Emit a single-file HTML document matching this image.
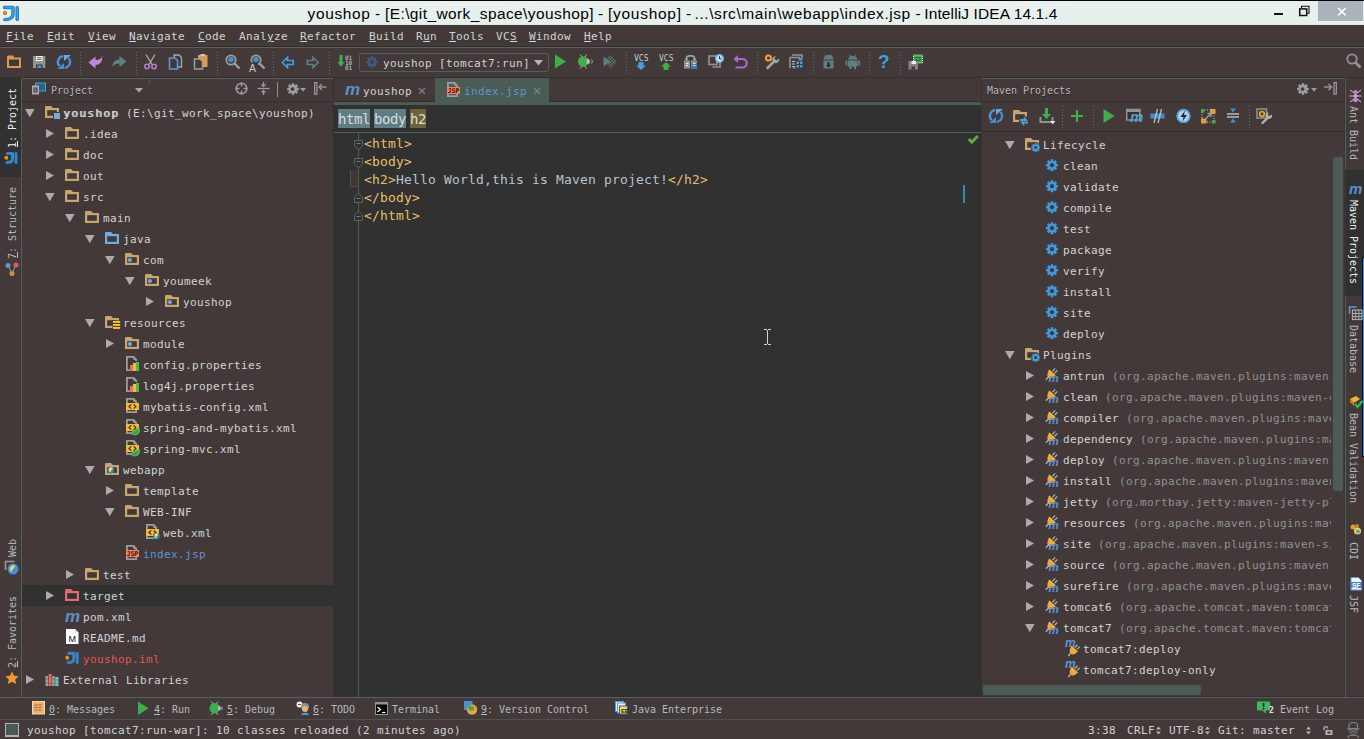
<!DOCTYPE html>
<html lang="en">
<head>
<meta charset="utf-8">
<title>youshop - IntelliJ IDEA 14.1.4</title>
<style>
html,body{margin:0;padding:0;}
body{width:1364px;height:739px;overflow:hidden;background:#433938;position:relative;
 font-family:"DejaVu Sans Mono","Liberation Mono",monospace;font-size:12px;color:#d0d4d4;}
body>div,body>span,body>svg{position:absolute;}
div{box-sizing:border-box;}
.t{white-space:pre;line-height:21px;height:21px;letter-spacing:0.378px;font-size:11px;}
.b{letter-spacing:1.378px;text-shadow:1px 0 0 currentColor;}
.e{white-space:pre;line-height:18px;height:18px;font-size:13px;letter-spacing:0.173px;}
.ti{white-space:pre;font-family:"Liberation Sans",sans-serif;font-size:15.5px;line-height:24px;color:#000;letter-spacing:0.38px;}
.v{white-space:pre;line-height:20px;height:20px;letter-spacing:-0.224px;font-size:12px;transform-origin:0 0;}
.s{white-space:pre;font-size:7px;line-height:7px;font-family:"Liberation Sans",sans-serif;}
u{text-decoration:underline;text-underline-offset:1px;text-decoration-thickness:1px;}
.i{overflow:visible;}
.h{white-space:pre;line-height:21px;height:21px;font-size:10px;letter-spacing:-0.02px;text-shadow:0 1px 0 #2a2423;}
.vr{white-space:pre;writing-mode:vertical-rl;font-size:10px;line-height:14px;width:14px;letter-spacing:-0.02px;color:#b4bac0;}
.vl{white-space:pre;writing-mode:vertical-rl;transform:rotate(180deg);font-size:10px;line-height:14px;width:14px;letter-spacing:-0.02px;color:#b4bac0;}
.q{white-space:pre;line-height:21px;height:21px;font-size:10px;letter-spacing:-0.02px;color:#b4bac0;}
.m{white-space:pre;color:#5a90cc;font:italic bold 17px/20px 'Liberation Sans',sans-serif;height:21px;letter-spacing:0;}
.jsp{color:#3a0c06;font-weight:bold;font-size:6.5px;line-height:7px;letter-spacing:0;font-family:'DejaVu Sans Mono',monospace;}
.pm{white-space:pre;color:#5a96d8;font:italic bold 11.5px/16px 'Liberation Sans',sans-serif;letter-spacing:0;}
.bc{font-size:14px;letter-spacing:-0.43px;color:#d8dcdc;line-height:19px;height:19px;}
</style>
</head>
<body>
<div style="left:0px;top:0px;width:1364px;height:1px;background:#000;"></div>
<div style="left:0px;top:1px;width:1364px;height:24px;background:#e8f0ee;"></div>
<div style="left:0px;top:24px;width:1364px;height:1px;background:#d9ecd9;"></div>
<span class="ti" style="left:307.6px;top:2px;letter-spacing:0.599px">youshop</span>
<span class="ti" style="left:375.1px;top:2px;letter-spacing:0px">-</span>
<span class="ti" style="left:385.0px;top:2px;letter-spacing:0.397px">[E:\git_work_space\youshop]</span>
<span class="ti" style="left:597.9px;top:2px;letter-spacing:0px">-</span>
<span class="ti" style="left:607.9px;top:2px;letter-spacing:0.742px">[youshop]</span>
<span class="ti" style="left:685.9px;top:2px;letter-spacing:0px">-</span>
<span class="ti" style="left:694.6px;top:2px;letter-spacing:0.563px">...\src\main\webapp\index.jsp</span>
<span class="ti" style="left:915.4px;top:2px;letter-spacing:0px">-</span>
<span class="ti" style="left:924.3px;top:2px;letter-spacing:0.107px">IntelliJ IDEA 14.1.4</span>
<svg class="i" style="left:3px;top:5px" width="18" height="17" viewBox="0 0 18 17"><path d="M1.5 2.5h8.5v6.5c0 3.6-3 5.6-8.2 5.6" fill="none" stroke="#1f6fae" stroke-width="3.4" stroke-linecap="round" stroke-linejoin="round"/><path d="M1.5 2.5h8.5v6.5c0 3.6-3 5.6-8.2 5.6" fill="none" stroke="#35a3e8" stroke-width="1.8" stroke-linecap="round" stroke-linejoin="round"/><path d="M14.2 2.6v11.8" stroke="#1f6fae" stroke-width="3.4" stroke-linecap="round"/><path d="M14.2 2.6v11.8" stroke="#35a3e8" stroke-width="1.6" stroke-linecap="round"/><circle cx="2" cy="8" r="2" fill="#b85c00"/><circle cx="2" cy="7.8" r="1.1" fill="#ff9a1a"/></svg>
<div style="left:1274px;top:13px;width:9px;height:2px;background:#111;"></div>
<svg class="i" style="left:1298px;top:5px" width="13" height="12" viewBox="0 0 13 12"><path d="M3.5 3V1.2h7.5v7h-1.8" fill="none" stroke="#111" stroke-width="1.1"/><rect x="1.7" y="3.9" width="7" height="6.6" fill="none" stroke="#111" stroke-width="1.5"/></svg>
<div style="left:1318px;top:1px;width:45px;height:20px;background:#abb2bb;"></div>
<svg class="i" style="left:1336px;top:6px" width="12" height="11" viewBox="0 0 12 11"><path d="M2.2 2l7.4 7.4M9.6 2l-7.4 7.400" stroke="#fff" stroke-width="1.6"/></svg>
<span class="t" style="left:6px;top:26px;color:#d0d4d4;"><u>F</u>ile</span>
<span class="t" style="left:47px;top:26px;color:#d0d4d4;"><u>E</u>dit</span>
<span class="t" style="left:88px;top:26px;color:#d0d4d4;"><u>V</u>iew</span>
<span class="t" style="left:129px;top:26px;color:#d0d4d4;"><u>N</u>avigate</span>
<span class="t" style="left:198px;top:26px;color:#d0d4d4;"><u>C</u>ode</span>
<span class="t" style="left:239px;top:26px;color:#d0d4d4;">Anal<u>y</u>ze</span>
<span class="t" style="left:300px;top:26px;color:#d0d4d4;"><u>R</u>efactor</span>
<span class="t" style="left:369px;top:26px;color:#d0d4d4;"><u>B</u>uild</span>
<span class="t" style="left:416px;top:26px;color:#d0d4d4;">R<u>u</u>n</span>
<span class="t" style="left:449px;top:26px;color:#d0d4d4;"><u>T</u>ools</span>
<span class="t" style="left:496px;top:26px;color:#d0d4d4;">VC<u>S</u></span>
<span class="t" style="left:529px;top:26px;color:#d0d4d4;"><u>W</u>indow</span>
<span class="t" style="left:584px;top:26px;color:#d0d4d4;"><u>H</u>elp</span>
<div style="left:0px;top:46px;width:1364px;height:1px;background:#352e2d;"></div>
<div style="left:0px;top:47px;width:1364px;height:1px;background:#50645c;"></div>
<div style="left:80px;top:52px;width:1px;height:23px;background:repeating-linear-gradient(to bottom,#56716c 0,#56716c 1px,transparent 1px,transparent 3px)"></div>
<div style="left:136px;top:52px;width:1px;height:23px;background:repeating-linear-gradient(to bottom,#56716c 0,#56716c 1px,transparent 1px,transparent 3px)"></div>
<div style="left:217px;top:52px;width:1px;height:23px;background:repeating-linear-gradient(to bottom,#56716c 0,#56716c 1px,transparent 1px,transparent 3px)"></div>
<div style="left:273px;top:52px;width:1px;height:23px;background:repeating-linear-gradient(to bottom,#56716c 0,#56716c 1px,transparent 1px,transparent 3px)"></div>
<div style="left:329px;top:52px;width:1px;height:23px;background:repeating-linear-gradient(to bottom,#56716c 0,#56716c 1px,transparent 1px,transparent 3px)"></div>
<div style="left:626px;top:52px;width:1px;height:23px;background:repeating-linear-gradient(to bottom,#56716c 0,#56716c 1px,transparent 1px,transparent 3px)"></div>
<div style="left:757px;top:52px;width:1px;height:23px;background:repeating-linear-gradient(to bottom,#56716c 0,#56716c 1px,transparent 1px,transparent 3px)"></div>
<div style="left:813px;top:52px;width:1px;height:23px;background:repeating-linear-gradient(to bottom,#56716c 0,#56716c 1px,transparent 1px,transparent 3px)"></div>
<div style="left:869px;top:52px;width:1px;height:23px;background:repeating-linear-gradient(to bottom,#56716c 0,#56716c 1px,transparent 1px,transparent 3px)"></div>
<div style="left:900px;top:52px;width:1px;height:23px;background:repeating-linear-gradient(to bottom,#56716c 0,#56716c 1px,transparent 1px,transparent 3px)"></div>
<svg class="i" style="left:7px;top:54px" width="16" height="16" viewBox="0 0 16 16"><rect x="1" y="4.500" width="12" height="8.500" fill="none" stroke="#d99a50" stroke-width="2"/><path d="M0 4v-1.500l1-1h5l1.500 2.500z" fill="#d99a50"/></svg>
<svg class="i" style="left:32px;top:54px" width="16" height="16" viewBox="0 0 16 16"><path d="M1 2h12.300v12h-12.300z" fill="#8f9593"/><rect x="4" y="2" width="6.500" height="5" fill="#f4f4f4"/><path d="M5 3.700h4.500M5 5.500h4.500" stroke="#555" stroke-width="0.900"/><rect x="4" y="10.500" width="6.500" height="3.500" fill="#433938"/><rect x="5.500" y="11.500" width="3.500" height="2.500" fill="#3f9fe0"/></svg>
<svg class="i" style="left:56px;top:54px" width="16" height="16" viewBox="0 0 16 16"><g transform="translate(1 1)"><path d="M6.300 1.200a5.800 5.800 0 0 0-3.600 10" fill="none" stroke="#4a96dc" stroke-width="2.300"/><path d="M0.200 14h6.800v-6z" fill="#3f8ed8"/><path d="M7.700 12.800a5.800 5.800 0 0 0 3.600-10" fill="none" stroke="#3f8ed8" stroke-width="2.300"/><path d="M13.800 0h-6.800v6z" fill="#62aaea"/></g></svg>
<svg class="i" style="left:88px;top:54px" width="16" height="16" viewBox="0 0 16 16"><path d="M0.500 8.500l7-6v3.500c4 0 6.500-1.500 6.500-4.500c1 5-1 9-6.500 9.500v3.500z" fill="#b98ad6"/></svg>
<svg class="i" style="left:112px;top:54px" width="16" height="16" viewBox="0 0 16 16"><path d="M14.500 7.500l-7-5.500v3.500c-4.500 0-7 3-7 7.500c1.500-2.500 3.500-3.500 7-3.500v3.500z" fill="#5c8285"/></svg>
<svg class="i" style="left:143px;top:54px" width="16" height="16" viewBox="0 0 16 16"><path d="M3 0.500l6 10M12 0.500l-6 10" stroke="#a8acab" stroke-width="1.300"/><circle cx="4" cy="12.500" r="2.200" fill="none" stroke="#b77fd0" stroke-width="1.600"/><circle cx="11" cy="12.500" r="2.200" fill="none" stroke="#b77fd0" stroke-width="1.600"/></svg>
<svg class="i" style="left:168px;top:54px" width="16" height="16" viewBox="0 0 16 16"><path d="M6 1h5l2.500 2.500v9.500h-7.500z" fill="#433938" stroke="#a8acab" stroke-width="1.300"/><path d="M1.500 4h5.500l2.500 2.500v8.500h-8z" fill="#433938" stroke="#5f95d8" stroke-width="1.600"/></svg>
<svg class="i" style="left:193px;top:54px" width="16" height="16" viewBox="0 0 16 16"><rect x="5" y="1" width="9.500" height="12" fill="#e09a50"/><rect x="7.500" y="0" width="4.500" height="2" fill="#c8ccc8"/><path d="M1.500 5h5.500l2.500 2.500v7.500h-8z" fill="#433938" stroke="#9a9e9d" stroke-width="1.500"/></svg>
<svg class="i" style="left:225px;top:54px" width="16" height="16" viewBox="0 0 16 16"><circle cx="6" cy="6" r="4.700" fill="none" stroke="#9a9e9d" stroke-width="1.800"/><circle cx="6" cy="5.500" r="2.800" fill="#3f8fd0"/><path d="M9.500 9.500l5 5" stroke="#9a9e9d" stroke-width="2.400"/></svg>
<svg class="i" style="left:250px;top:54px" width="16" height="16" viewBox="0 0 16 16"><circle cx="6" cy="6" r="4.700" fill="none" stroke="#9a9e9d" stroke-width="1.800"/><circle cx="6" cy="5.500" r="2.800" fill="#3f8fd0"/><path d="M9.500 9.500l5 5" stroke="#9a9e9d" stroke-width="2.400"/><rect x="0" y="8.500" width="8" height="8" fill="#433938"/></svg>
<span class="s" style="left:249px;top:63px;color:#c8ccc8;font-size:10.500px;line-height:10px">A</span>
<svg class="i" style="left:281px;top:56px" width="14" height="13" viewBox="0 0 14 13"><path d="M1.300 6.500l5.200-5v3h5.700v4h-5.700v3z" fill="#433938" stroke="#3f9fe0" stroke-width="1.700" stroke-linejoin="miter"/></svg>
<svg class="i" style="left:306px;top:56px" width="14" height="13" viewBox="0 0 14 13"><path d="M12.200 6.500l-5.200-5v3h-5.700v4h5.700v3z" fill="#433938" stroke="#5c8285" stroke-width="1.700" stroke-linejoin="miter"/></svg>
<svg class="i" style="left:337px;top:54px" width="16" height="16" viewBox="0 0 16 16"><path d="M4 1v9" stroke="#3fae4c" stroke-width="3"/><path d="M0.500 8h7l-3.500 5z" fill="#3fae4c"/></svg>
<span class="s" style="left:345px;top:55px;color:#d0d4d3;font-size:6px;line-height:5px;letter-spacing:0px;font-family:'DejaVu Sans Mono',monospace">01</span>
<span class="s" style="left:345px;top:60px;color:#d0d4d3;font-size:6px;line-height:5px;letter-spacing:0px;font-family:'DejaVu Sans Mono',monospace">10</span>
<span class="s" style="left:345px;top:65px;color:#d0d4d3;font-size:6px;line-height:5px;letter-spacing:0px;font-family:'DejaVu Sans Mono',monospace">01</span>
<div style="left:359px;top:53px;width:190px;height:19px;background:transparent;border:1px solid #4d625b;border-radius:3px"></div>
<svg class="i" style="left:364px;top:54px" width="16" height="16" viewBox="0 0 16 16"><path d="M13.76 6.71L13.76 9.29L12.13 9.20L11.77 10.07L12.98 11.16L11.16 12.98L10.07 11.77L9.20 12.13L9.29 13.76L6.71 13.76L6.80 12.13L5.93 11.77L4.84 12.98L3.02 11.16L4.23 10.07L3.87 9.20L2.24 9.29L2.24 6.71L3.87 6.80L4.23 5.93L3.02 4.84L4.84 3.02L5.93 4.23L6.80 3.87L6.71 2.24L9.29 2.24L9.20 3.87L10.07 4.23L11.16 3.02L12.98 4.84L11.77 5.93L12.13 6.80z" fill="#3e5a80"/><circle cx="8" cy="8" r="1.8059999999999998" fill="#433938"/></svg>
<span class="t" style="left:383px;top:53px;color:#cdd3d8;">youshop [tomcat7:run]</span>
<svg class="i" style="left:534px;top:60px" width="9" height="6" viewBox="0 0 9 6"><path d="M0 0h9l-4.500 5.500z" fill="#b0b4b3"/></svg>
<svg class="i" style="left:554px;top:54px" width="16" height="16" viewBox="0 0 16 16"><path d="M1 0.500l11 7l-11 7z" fill="#3fae4c"/></svg>
<svg class="i" style="left:577px;top:54px" width="16" height="16" viewBox="0 0 16 16"><path d="M3 0.500l3 3.500M3 14.500l3-3.500M9.500 0.500l-2 3.500M9.500 14.500l-2-3.500" stroke="#b0b4b3" stroke-width="1"/><ellipse cx="6" cy="7.500" rx="5" ry="5.200" fill="#3fae4c"/><path d="M9.500 4.500c2 0 3.500 1.300 3.500 3s-1.500 3-3.500 3z" fill="#b8bcbb"/><path d="M14.500 5.500c1 1 1 3 0 4" stroke="#b0b4b3" stroke-width="1" fill="none"/></svg>
<svg class="i" style="left:602px;top:54px" width="16" height="16" viewBox="0 0 16 16"><defs><pattern id="ck" width="3" height="3" patternUnits="userSpaceOnUse"><rect width="1.500" height="1.500" fill="#5a7a6a"/><rect x="1.500" y="1.500" width="1.500" height="1.500" fill="#5a7a6a"/></pattern></defs><path d="M8.500 0.500l6.500 7l-6.500 7l-6-7z" fill="url(#ck)"/><path d="M1.500 2.500l7 5l-7 5z" fill="#5a7f80"/></svg>
<span class="s" style="left:634px;top:55px;color:#c8ccc8;font-size:8px;line-height:7px;letter-spacing:0px;font-family:'DejaVu Sans Mono',monospace">VCS</span>
<svg class="i" style="left:636px;top:62px" width="10" height="8" viewBox="0 0 10 8"><path d="M2.500 0h5v3.500h2.500l-5 4.500l-5-4.500h2.500z" fill="#3f9fe0"/></svg>
<span class="s" style="left:659px;top:55px;color:#c8ccc8;font-size:8px;line-height:7px;letter-spacing:0px;font-family:'DejaVu Sans Mono',monospace">VCS</span>
<svg class="i" style="left:661px;top:62px" width="10" height="8" viewBox="0 0 10 8"><path d="M2.500 8h5v-3.500h2.500l-5-4.500l-5 4.500h2.500z" fill="#3fae4c"/></svg>
<svg class="i" style="left:683px;top:54px" width="16" height="16" viewBox="0 0 16 16"><path d="M1 6.500h6v8h-6zM8 6.500h6v8h-6z" fill="#8f9593"/><rect x="8.500" y="9" width="5.500" height="5.500" fill="#2f7fc0"/><path d="M3 9.500h2.500M3 11.500h2.500M10 9.500h2.500M10 11.500h2.500" stroke="#e8e8e8" stroke-width="1"/><path d="M3.500 5.500v-1.500c0-3 8-3 8 0v1.500" fill="none" stroke="#a8acab" stroke-width="1.400"/><path d="M1.500 4.500h4l-2 2.500zM9.500 4.500h4l-2 2.500z" fill="#a8acab"/></svg>
<svg class="i" style="left:708px;top:54px" width="16" height="16" viewBox="0 0 16 16"><rect x="1" y="2" width="8" height="8.500" fill="none" stroke="#8f9593" stroke-width="1.600"/><path d="M4.500 13h7.500v-6" fill="none" stroke="#8f9593" stroke-width="1.600"/><circle cx="11.500" cy="4.500" r="4.300" fill="#bfe0fa"/><circle cx="11.500" cy="4.500" r="3.800" fill="none" stroke="#5aa6e0" stroke-width="1"/><path d="M11.500 2.200v2.600h2" fill="none" stroke="#234" stroke-width="1"/></svg>
<svg class="i" style="left:733px;top:54px" width="16" height="16" viewBox="0 0 16 16"><path d="M5 1l-4.500 4l4.500 4z" fill="#b068d0"/><path d="M4 5h5.500a4 4 0 0 1 0 8.500h-7" fill="none" stroke="#b068d0" stroke-width="2.200"/></svg>
<svg class="i" style="left:764px;top:54px" width="16" height="16" viewBox="0 0 16 16"><circle cx="4.500" cy="4" r="2.600" fill="none" stroke="#f0a030" stroke-width="2"/><path d="M3.500 14l6.500-6.500" stroke="#a0a4a3" stroke-width="2.600" stroke-linecap="round"/><path d="M15 4.500a3.500 3.500 0 1 1-3.200-2.300l-1.400 2.700l2.300 1.400z" fill="#a0a4a3"/></svg>
<svg class="i" style="left:789px;top:54px" width="16" height="16" viewBox="0 0 16 16"><path d="M3 1h10v3M1 14v-10.500h9.500v3" fill="none" stroke="#8f9593" stroke-width="1.600"/><path d="M3 7.500h3M3 10h3M3 12.500h3" stroke="#c8ccc8" stroke-width="1"/><rect x="7.500" y="7.500" width="2.500" height="2.500" fill="#3f9fe0"/><rect x="11" y="7.500" width="2.500" height="2.500" fill="#3f9fe0"/><rect x="7.500" y="11" width="2.500" height="2.500" fill="#3f9fe0"/><rect x="11" y="11" width="2.500" height="2.500" fill="#3f9fe0"/><rect x="11" y="4" width="2.500" height="2.500" fill="#3f9fe0"/><rect x="4" y="12.500" width="2.500" height="2" fill="#3f9fe0"/></svg>
<svg class="i" style="left:822px;top:54px" width="13" height="15" viewBox="0 0 13 15"><path d="M3 0.500l1.500 2M10 0.500l-1.500 2" stroke="#5f8082" stroke-width="1"/><path d="M1.500 5.500a5 4.500 0 0 1 10 0z" fill="#5f8082"/><rect x="1.500" y="6.500" width="10" height="8" fill="#5f8082"/><path d="M6.500 8v3.500" stroke="#2a2423" stroke-width="1.800"/><path d="M4 11h5l-2.500 2.500z" fill="#2a2423"/></svg>
<svg class="i" style="left:845px;top:54px" width="16" height="15" viewBox="0 0 16 15"><path d="M4.500 0.500l1.500 2M11 0.500l-1.500 2" stroke="#5f8082" stroke-width="1"/><path d="M3 5.500a4.800 4.500 0 0 1 9.500 0z" fill="#5f8082"/><rect x="3" y="6.500" width="9.500" height="6" fill="#5f8082"/><rect x="0.500" y="6.500" width="1.800" height="5" fill="#5f8082"/><rect x="13.200" y="6.500" width="1.800" height="5" fill="#5f8082"/><rect x="4.500" y="12" width="2" height="3" fill="#5f8082"/><rect x="9" y="12" width="2" height="3" fill="#5f8082"/></svg>
<span class="s" style="left:878px;top:51px;color:#3f9fe0;font:bold 19px/22px 'Liberation Sans',sans-serif">?</span>
<svg class="i" style="left:908px;top:54px" width="16" height="16" viewBox="0 0 16 16"><rect x="5.500" y="1" width="9" height="8" fill="#3fae4c" stroke="#c8e8c8" stroke-width="1" stroke-dasharray="1 1"/><rect x="8" y="3.500" width="4" height="3" fill="none" stroke="#2a6a30" stroke-width="1"/><path d="M0.500 7h9.500v8.500h-9.500z" fill="#7d8684"/><rect x="3.500" y="7" width="4.500" height="3" fill="#f0f0f0"/><rect x="3.500" y="12.500" width="3.500" height="3" fill="#433938"/></svg>
<svg class="i" style="left:1346px;top:53px" width="16" height="16" viewBox="0 0 16 16"><circle cx="6" cy="6" r="4.700" fill="none" stroke="#8f9593" stroke-width="1.800"/><path d="M9.500 9.500l5 5" stroke="#8f9593" stroke-width="2.600"/></svg>
<div style="left:0px;top:77px;width:1364px;height:1px;background:#352e2d;"></div>
<div style="left:22px;top:78px;width:311px;height:1px;background:#50645c;"></div>
<div style="left:982px;top:78px;width:363px;height:1px;background:#50645c;"></div>
<div style="left:0px;top:77px;width:21px;height:621px;background:#433938;"></div>
<div style="left:0px;top:77px;width:21px;height:100px;background:#313131;"></div>
<div style="left:21px;top:78px;width:1px;height:620px;background:#4a625a;"></div>
<div style="left:333px;top:78px;width:648px;height:619px;background:#313131;"></div>
<div style="left:333px;top:78px;width:2px;height:25px;background:#433938;"></div>
<div style="left:22px;top:101px;width:311px;height:1px;background:#352e2d;"></div>
<svg class="i" style="left:31px;top:82px" width="16" height="16" viewBox="0 0 16 16"><rect x="4.5" y="1" width="10" height="8" fill="#2f5f8a" stroke="#3fa9c8" stroke-width="1"/><rect x="1" y="3.5" width="7" height="9" fill="#a9adb0"/><rect x="3" y="6" width="3" height="4" fill="none" stroke="#433938" stroke-width="1"/><path d="M3 8h3" stroke="#433938" stroke-width="1"/></svg>
<span class="h" style="left:51px;top:80px;color:#b4bac0;">Project</span>
<svg class="i" style="left:135px;top:88px" width="8" height="5" viewBox="0 0 8 5"><path d="M0 0h8l-4 4.6z" fill="#a8acab"/></svg>
<div style="left:149px;top:79px;width:1px;height:5px;background:#4a5c56;"></div>
<svg class="i" style="left:235px;top:82px" width="13" height="13" viewBox="0 0 13 13"><circle cx="6.5" cy="6.5" r="5.3" fill="none" stroke="#9a9e9d" stroke-width="1.5"/><path d="M6.5 0.5v4M6.5 8.5v4M0.5 6.5h4M8.500 6.5h4" stroke="#9a9e9d" stroke-width="1.5"/></svg>
<svg class="i" style="left:257px;top:82px" width="13" height="13" viewBox="0 0 13 13"><path d="M0.500 6.500h12" stroke="#9a9e9d" stroke-width="1.300"/><path d="M6.500 0v4.500M6.500 8.500v4.500" stroke="#9a9e9d" stroke-width="1.300"/><path d="M4.300 2.300l2.200 2.200l2.200-2.200M4.300 10.700l2.200-2.200l2.200 2.200" fill="none" stroke="#9a9e9d" stroke-width="1.200"/></svg>
<div style="left:277px;top:82px;width:1px;height:15px;background:#8a908e;"></div>
<svg class="i" style="left:285px;top:81px" width="16" height="16" viewBox="0 0 16 16"><path d="M13.86 6.69L13.86 9.31L12.23 9.23L11.86 10.12L13.07 11.21L11.21 13.07L10.12 11.86L9.23 12.23L9.31 13.86L6.69 13.86L6.77 12.23L5.88 11.86L4.79 13.07L2.93 11.21L4.14 10.12L3.77 9.23L2.14 9.31L2.14 6.69L3.77 6.77L4.14 5.88L2.93 4.79L4.79 2.93L5.88 4.14L6.77 3.77L6.69 2.14L9.31 2.14L9.23 3.77L10.12 4.14L11.21 2.93L13.07 4.79L11.86 5.88L12.23 6.77z" fill="#9a9e9d"/><circle cx="7.500" cy="8" r="1.848" fill="#433938"/></svg>
<svg class="i" style="left:300px;top:88px" width="6" height="4" viewBox="0 0 6 4"><path d="M0 0h6l-3 3.600z" fill="#9a9e9d"/></svg>
<svg class="i" style="left:314px;top:82px" width="13" height="13" viewBox="0 0 13 13"><rect x="0.600" y="0.600" width="2.300" height="11.500" fill="none" stroke="#9a9e9d" stroke-width="1.200"/><path d="M5 5h7.500" stroke="#9a9e9d" stroke-width="1.300"/><path d="M8 2l-3 3l3 3" fill="none" stroke="#9a9e9d" stroke-width="1.300"/></svg>
<svg class="i" style="left:25px;top:103px" width="16" height="21" viewBox="0 0 16 21"><path d="M0 6h9.600l-4.800 8.300z" fill="#a9abac"/></svg>
<svg class="i" style="left:45px;top:103px" width="16" height="21" viewBox="0 0 16 21"><path d="M0 5v-1.200l0.800-0.800h5.200l2 2z" fill="#c8a46e"/><rect x="1.100" y="6.100" width="11.800" height="7.800" fill="none" stroke="#c8a46e" stroke-width="2.200"/><rect x="8" y="9" width="8" height="8" fill="#433938"/><rect x="9" y="10" width="6" height="6" fill="#72aada"/></svg>
<span class="t" style="left:63px;top:103px;color:#d0d4d4;"><span class="b">youshop</span> (E:\git_work_space\youshop)</span>
<svg class="i" style="left:45px;top:124px" width="16" height="21" viewBox="0 0 16 21"><path d="M1 5l8 4.500l-8 4.500z" fill="#a9abac"/></svg>
<svg class="i" style="left:65px;top:124px" width="16" height="21" viewBox="0 0 16 21"><path d="M0 5v-1.200l0.800-0.800h5.200l2 2z" fill="#c8a46e"/><rect x="1.100" y="6.100" width="11.800" height="7.800" fill="none" stroke="#c8a46e" stroke-width="2.200"/></svg>
<span class="t" style="left:83px;top:124px;color:#d0d4d4;">.idea</span>
<svg class="i" style="left:45px;top:145px" width="16" height="21" viewBox="0 0 16 21"><path d="M1 5l8 4.500l-8 4.500z" fill="#a9abac"/></svg>
<svg class="i" style="left:65px;top:145px" width="16" height="21" viewBox="0 0 16 21"><path d="M0 5v-1.200l0.800-0.800h5.200l2 2z" fill="#c8a46e"/><rect x="1.100" y="6.100" width="11.800" height="7.800" fill="none" stroke="#c8a46e" stroke-width="2.200"/></svg>
<span class="t" style="left:83px;top:145px;color:#d0d4d4;">doc</span>
<svg class="i" style="left:45px;top:166px" width="16" height="21" viewBox="0 0 16 21"><path d="M1 5l8 4.500l-8 4.500z" fill="#a9abac"/></svg>
<svg class="i" style="left:65px;top:166px" width="16" height="21" viewBox="0 0 16 21"><path d="M0 5v-1.200l0.800-0.800h5.200l2 2z" fill="#c8a46e"/><rect x="1.100" y="6.100" width="11.800" height="7.800" fill="none" stroke="#c8a46e" stroke-width="2.200"/></svg>
<span class="t" style="left:83px;top:166px;color:#d0d4d4;">out</span>
<svg class="i" style="left:45px;top:187px" width="16" height="21" viewBox="0 0 16 21"><path d="M0 6h9.600l-4.800 8.300z" fill="#a9abac"/></svg>
<svg class="i" style="left:65px;top:187px" width="16" height="21" viewBox="0 0 16 21"><path d="M0 5v-1.200l0.800-0.800h5.200l2 2z" fill="#c8a46e"/><rect x="1.100" y="6.100" width="11.800" height="7.800" fill="none" stroke="#c8a46e" stroke-width="2.200"/></svg>
<span class="t" style="left:83px;top:187px;color:#d0d4d4;">src</span>
<svg class="i" style="left:65px;top:208px" width="16" height="21" viewBox="0 0 16 21"><path d="M0 6h9.600l-4.800 8.300z" fill="#a9abac"/></svg>
<svg class="i" style="left:85px;top:208px" width="16" height="21" viewBox="0 0 16 21"><path d="M0 5v-1.200l0.800-0.800h5.200l2 2z" fill="#c8a46e"/><rect x="1.100" y="6.100" width="11.800" height="7.800" fill="none" stroke="#c8a46e" stroke-width="2.200"/></svg>
<span class="t" style="left:103px;top:208px;color:#d0d4d4;">main</span>
<svg class="i" style="left:85px;top:229px" width="16" height="21" viewBox="0 0 16 21"><path d="M0 6h9.600l-4.800 8.300z" fill="#a9abac"/></svg>
<svg class="i" style="left:105px;top:229px" width="16" height="21" viewBox="0 0 16 21"><path d="M0 5v-1.200l0.800-0.800h5.200l2 2z" fill="#6faee0"/><rect x="1.100" y="6.100" width="11.800" height="7.800" fill="none" stroke="#6faee0" stroke-width="2.200"/></svg>
<span class="t" style="left:123px;top:229px;color:#d0d4d4;">java</span>
<svg class="i" style="left:105px;top:250px" width="16" height="21" viewBox="0 0 16 21"><path d="M0 6h9.600l-4.800 8.300z" fill="#a9abac"/></svg>
<svg class="i" style="left:125px;top:250px" width="16" height="21" viewBox="0 0 16 21"><path d="M0 5v-1.200l0.800-0.800h5.200l2 2z" fill="#c8a46e"/><rect x="1.100" y="6.100" width="11.800" height="7.800" fill="none" stroke="#c8a46e" stroke-width="2.200"/><circle cx="4.900" cy="10.100" r="2.100" fill="#6aa8e2"/></svg>
<span class="t" style="left:143px;top:250px;color:#d0d4d4;">com</span>
<svg class="i" style="left:125px;top:271px" width="16" height="21" viewBox="0 0 16 21"><path d="M0 6h9.600l-4.800 8.300z" fill="#a9abac"/></svg>
<svg class="i" style="left:145px;top:271px" width="16" height="21" viewBox="0 0 16 21"><path d="M0 5v-1.200l0.800-0.800h5.200l2 2z" fill="#c8a46e"/><rect x="1.100" y="6.100" width="11.800" height="7.800" fill="none" stroke="#c8a46e" stroke-width="2.200"/><circle cx="4.900" cy="10.100" r="2.100" fill="#6aa8e2"/></svg>
<span class="t" style="left:163px;top:271px;color:#d0d4d4;">youmeek</span>
<svg class="i" style="left:145px;top:292px" width="16" height="21" viewBox="0 0 16 21"><path d="M1 5l8 4.500l-8 4.500z" fill="#a9abac"/></svg>
<svg class="i" style="left:165px;top:292px" width="16" height="21" viewBox="0 0 16 21"><path d="M0 5v-1.200l0.800-0.800h5.200l2 2z" fill="#c8a46e"/><rect x="1.100" y="6.100" width="11.800" height="7.800" fill="none" stroke="#c8a46e" stroke-width="2.200"/><circle cx="4.900" cy="10.100" r="2.100" fill="#6aa8e2"/></svg>
<span class="t" style="left:183px;top:292px;color:#d0d4d4;">youshop</span>
<svg class="i" style="left:85px;top:313px" width="16" height="21" viewBox="0 0 16 21"><path d="M0 6h9.600l-4.800 8.300z" fill="#a9abac"/></svg>
<svg class="i" style="left:105px;top:313px" width="16" height="21" viewBox="0 0 16 21"><path d="M0 5v-1.200l0.800-0.800h5.200l2 2z" fill="#c8a46e"/><rect x="1.100" y="6.100" width="11.800" height="7.800" fill="none" stroke="#c8a46e" stroke-width="2.200"/><rect x="7.500" y="7.500" width="8.500" height="9" fill="#433938"/><path d="M8 9h7.200M8 12h7.200M8 15h7.200" stroke="#f2b21c" stroke-width="2"/><path d="M8 8.600h7.200M8 11.600h7.200M8 14.600h7.200" stroke="#ffd84a" stroke-width="0.800" stroke-dasharray="1.500 1"/></svg>
<span class="t" style="left:123px;top:313px;color:#d0d4d4;">resources</span>
<svg class="i" style="left:105px;top:334px" width="16" height="21" viewBox="0 0 16 21"><path d="M1 5l8 4.500l-8 4.500z" fill="#a9abac"/></svg>
<svg class="i" style="left:125px;top:334px" width="16" height="21" viewBox="0 0 16 21"><path d="M0 5v-1.200l0.800-0.800h5.200l2 2z" fill="#c8a46e"/><rect x="1.100" y="6.100" width="11.800" height="7.800" fill="none" stroke="#c8a46e" stroke-width="2.200"/><circle cx="4.900" cy="10.100" r="2.100" fill="#6aa8e2"/></svg>
<span class="t" style="left:143px;top:334px;color:#d0d4d4;">module</span>
<svg class="i" style="left:125px;top:355px" width="16" height="21" viewBox="0 0 16 21"><path d="M1.900 1.900h6.600l2.700 2.700v10.500h-9.300z" fill="none" stroke="#9c9ca8" stroke-width="1.800"/><path d="M8.200 1.500v3.300h3.300z" fill="#9c9ca8"/><rect x="4.800" y="6" width="9.400" height="10" fill="#433938"/><rect x="5" y="10" width="3" height="6" fill="#f26a64"/><rect x="8" y="8" width="3" height="8" fill="#f4bc3c"/><rect x="11" y="7" width="3" height="9" fill="#3fc446"/></svg>
<span class="t" style="left:143px;top:355px;color:#d0d4d4;">config.properties</span>
<svg class="i" style="left:125px;top:376px" width="16" height="21" viewBox="0 0 16 21"><path d="M1.900 1.900h6.600l2.700 2.700v10.500h-9.300z" fill="none" stroke="#9c9ca8" stroke-width="1.800"/><path d="M8.200 1.500v3.300h3.300z" fill="#9c9ca8"/><rect x="4.800" y="6" width="9.400" height="10" fill="#433938"/><rect x="5" y="10" width="3" height="6" fill="#f26a64"/><rect x="8" y="8" width="3" height="8" fill="#f4bc3c"/><rect x="11" y="7" width="3" height="9" fill="#3fc446"/></svg>
<span class="t" style="left:143px;top:376px;color:#d0d4d4;">log4j.properties</span>
<svg class="i" style="left:125px;top:397px" width="16" height="21" viewBox="0 0 16 21"><path d="M1.900 1.900h6.600l2.700 2.700v10.500h-9.300z" fill="none" stroke="#9c9ca8" stroke-width="1.800"/><path d="M8.200 1.500v3.300h3.300z" fill="#9c9ca8"/><rect x="1" y="6" width="13" height="7" fill="#f4ba30"/><path d="M6.300 7.400l-2.300 2.100l2.300 2.100M8.600 7.400l2.300 2.100l-2.300 2.100" fill="none" stroke="#3a2f10" stroke-width="1.200"/></svg>
<span class="t" style="left:143px;top:397px;color:#d0d4d4;">mybatis-config.xml</span>
<svg class="i" style="left:125px;top:418px" width="16" height="21" viewBox="0 0 16 21"><path d="M1.900 1.900h6.600l2.700 2.700v10.500h-9.300z" fill="none" stroke="#9c9ca8" stroke-width="1.800"/><path d="M8.200 1.500v3.300h3.300z" fill="#9c9ca8"/><rect x="1" y="6" width="13" height="7" fill="#f4ba30"/><path d="M6.300 7.400l-2.300 2.100l2.300 2.100M8.600 7.400l2.300 2.100l-2.300 2.100" fill="none" stroke="#3a2f10" stroke-width="1.200"/><path d="M6.500 16.500c-1-3.500 2.500-6 8.500-6c0.800 4-2 7.500-6 6.800c-1 0-2-0.300-2.500-0.800z" fill="#46b450"/><path d="M8.500 15.500c2-0.500 3.500-1.500 4.500-3" fill="none" stroke="#2f8a3a" stroke-width="1"/></svg>
<span class="t" style="left:143px;top:418px;color:#d0d4d4;">spring-and-mybatis.xml</span>
<svg class="i" style="left:125px;top:439px" width="16" height="21" viewBox="0 0 16 21"><path d="M1.900 1.900h6.600l2.700 2.700v10.500h-9.300z" fill="none" stroke="#9c9ca8" stroke-width="1.800"/><path d="M8.200 1.500v3.300h3.300z" fill="#9c9ca8"/><rect x="1" y="6" width="13" height="7" fill="#f4ba30"/><path d="M6.300 7.400l-2.300 2.100l2.300 2.100M8.600 7.400l2.300 2.100l-2.300 2.100" fill="none" stroke="#3a2f10" stroke-width="1.200"/><path d="M6.500 16.500c-1-3.500 2.500-6 8.500-6c0.800 4-2 7.500-6 6.800c-1 0-2-0.300-2.500-0.800z" fill="#46b450"/><path d="M8.500 15.500c2-0.500 3.500-1.500 4.500-3" fill="none" stroke="#2f8a3a" stroke-width="1"/></svg>
<span class="t" style="left:143px;top:439px;color:#d0d4d4;">spring-mvc.xml</span>
<svg class="i" style="left:85px;top:460px" width="16" height="21" viewBox="0 0 16 21"><path d="M0 6h9.600l-4.800 8.300z" fill="#a9abac"/></svg>
<svg class="i" style="left:105px;top:460px" width="16" height="21" viewBox="0 0 16 21"><path d="M0 5v-1.200l0.800-0.800h5.200l2 2z" fill="#c8a46e"/><rect x="1.100" y="6.100" width="11.800" height="7.800" fill="none" stroke="#c8a46e" stroke-width="2.200"/><g transform="translate(5.800 10.100)"><circle cx="0" cy="0" r="3.300" fill="#2f7fd8"/><path d="M-1.800 -1.600c1-1.200 2.600-1.600 3.600-0.800c0.400 1.400-0.600 2.200-1.400 2.600c-0.400 0.800 0 1.800-0.800 2.200c-1.200-0.600-2-2.400-1.400-4z" fill="#f4d23c"/><circle cx="-0.600" cy="-1.200" r="0.900" fill="#fff2a0"/></g></svg>
<span class="t" style="left:123px;top:460px;color:#d0d4d4;">webapp</span>
<svg class="i" style="left:105px;top:481px" width="16" height="21" viewBox="0 0 16 21"><path d="M1 5l8 4.500l-8 4.500z" fill="#a9abac"/></svg>
<svg class="i" style="left:125px;top:481px" width="16" height="21" viewBox="0 0 16 21"><path d="M0 5v-1.200l0.800-0.800h5.200l2 2z" fill="#c8a46e"/><rect x="1.100" y="6.100" width="11.800" height="7.800" fill="none" stroke="#c8a46e" stroke-width="2.200"/></svg>
<span class="t" style="left:143px;top:481px;color:#d0d4d4;">template</span>
<svg class="i" style="left:105px;top:502px" width="16" height="21" viewBox="0 0 16 21"><path d="M0 6h9.600l-4.800 8.300z" fill="#a9abac"/></svg>
<svg class="i" style="left:125px;top:502px" width="16" height="21" viewBox="0 0 16 21"><path d="M0 5v-1.200l0.800-0.800h5.200l2 2z" fill="#c8a46e"/><rect x="1.100" y="6.100" width="11.800" height="7.800" fill="none" stroke="#c8a46e" stroke-width="2.200"/></svg>
<span class="t" style="left:143px;top:502px;color:#d0d4d4;">WEB-INF</span>
<svg class="i" style="left:145px;top:523px" width="16" height="21" viewBox="0 0 16 21"><path d="M1.900 1.900h6.600l2.700 2.700v10.500h-9.300z" fill="none" stroke="#9c9ca8" stroke-width="1.800"/><path d="M8.200 1.500v3.300h3.300z" fill="#9c9ca8"/><rect x="1" y="6" width="13" height="7" fill="#f4ba30"/><path d="M6.300 7.400l-2.300 2.100l2.300 2.100M8.600 7.400l2.300 2.100l-2.300 2.100" fill="none" stroke="#3a2f10" stroke-width="1.200"/><g transform="translate(11.500 13)"><circle cx="0" cy="0" r="3.300" fill="#2f7fd8"/><path d="M-1.800 -1.600c1-1.200 2.600-1.600 3.600-0.800c0.400 1.400-0.600 2.200-1.400 2.600c-0.400 0.800 0 1.800-0.800 2.200c-1.200-0.600-2-2.400-1.400-4z" fill="#f4d23c"/><circle cx="-0.600" cy="-1.200" r="0.900" fill="#fff2a0"/></g></svg>
<span class="t" style="left:163px;top:523px;color:#d0d4d4;">web.xml</span>
<svg class="i" style="left:125px;top:544px" width="16" height="21" viewBox="0 0 16 21"><path d="M1.900 1.900h6.600l2.700 2.700v10.500h-9.300z" fill="none" stroke="#9c9ca8" stroke-width="1.800"/><path d="M8.200 1.500v3.300h3.300z" fill="#9c9ca8"/><rect x="1" y="6" width="13" height="7" fill="#f4825e"/></svg>
<span class="s jsp" style="left:126.5px;top:550.5px">JSP</span>
<span class="t" style="left:143px;top:544px;color:#5f95cf;">index.jsp</span>
<svg class="i" style="left:65px;top:565px" width="16" height="21" viewBox="0 0 16 21"><path d="M1 5l8 4.500l-8 4.500z" fill="#a9abac"/></svg>
<svg class="i" style="left:85px;top:565px" width="16" height="21" viewBox="0 0 16 21"><path d="M0 5v-1.200l0.800-0.800h5.200l2 2z" fill="#c8a46e"/><rect x="1.100" y="6.100" width="11.800" height="7.800" fill="none" stroke="#c8a46e" stroke-width="2.200"/></svg>
<span class="t" style="left:103px;top:565px;color:#d0d4d4;">test</span>
<div style="left:22px;top:585px;width:311px;height:21px;background:#313131;"></div>
<svg class="i" style="left:45px;top:586px" width="16" height="21" viewBox="0 0 16 21"><path d="M1 5l8 4.500l-8 4.500z" fill="#a9abac"/></svg>
<svg class="i" style="left:65px;top:586px" width="16" height="21" viewBox="0 0 16 21"><path d="M0 5v-1.200l0.800-0.800h5.200l2 2z" fill="#e26a72"/><rect x="1.100" y="6.100" width="11.800" height="7.800" fill="none" stroke="#e26a72" stroke-width="2.200"/></svg>
<span class="t" style="left:83px;top:586px;color:#d0d4d4;">target</span>
<span class="m" style="left:65px;top:607px">m</span>
<span class="t" style="left:83px;top:607px;color:#d0d4d4;">pom.xml</span>
<svg class="i" style="left:65px;top:628px" width="16" height="21" viewBox="0 0 16 21"><path d="M1 1h9l3.500 3.500v11.500h-12.500z" fill="#ffffff"/><path d="M10 1l3.500 3.500h-3.500z" fill="#d4d4dc"/></svg>
<span class="s" style="left:68.5px;top:634px;color:#111;font-size:9px;line-height:10px">M</span>
<span class="t" style="left:83px;top:628px;color:#d0d4d4;">README.md</span>
<svg class="i" style="left:65px;top:649px" width="16" height="21" viewBox="0 0 16 21"><path d="M3.8 4.200h5v5.200c0 3-2.200 4.200-5.600 4.200" fill="none" stroke="#2f86cc" stroke-width="3" stroke-linecap="round" stroke-linejoin="round"/><path d="M12.2 4.200v9.400" stroke="#2f86cc" stroke-width="3" stroke-linecap="round"/><circle cx="2.200" cy="8.800" r="2" fill="#f08a1c"/></svg>
<span class="t" style="left:83px;top:649px;color:#e0574f;">youshop.iml</span>
<svg class="i" style="left:25px;top:670px" width="16" height="21" viewBox="0 0 16 21"><path d="M1 5l8 4.500l-8 4.500z" fill="#a9abac"/></svg>
<svg class="i" style="left:45px;top:670px" width="16" height="21" viewBox="0 0 16 21"><rect x="0.5" y="6" width="2.6" height="10" fill="#9a9ea4"/><rect x="3.6" y="4" width="3" height="12" fill="#e2706a"/><rect x="7.1" y="6" width="2.6" height="10" fill="#9a9ea4"/><rect x="10.2" y="7" width="3.3" height="9" fill="#6cc4c0"/><path d="M0.5 9h2.6M0.5 13h2.6M7.1 9h2.6M7.1 13h2.6M10.2 10h3.3M10.2 13.5h3.3M3.6 7h3M3.6 13.5h3" stroke="#433938" stroke-width="0.7" opacity="0.5"/></svg>
<span class="t" style="left:63px;top:670px;color:#d0d4d4;">External Libraries</span>
<div style="left:435px;top:78px;width:114px;height:25px;background:#4b5b55;"></div>
<div style="left:334px;top:102px;width:647px;height:3px;background:#4b5b55;"></div>
<div style="left:334px;top:101px;width:101px;height:1px;background:#352e2d;"></div>
<div style="left:549px;top:101px;width:432px;height:1px;background:#352e2d;"></div>
<div style="left:334px;top:78px;width:101px;height:23px;background:#433938;"></div>
<div style="left:549px;top:78px;width:432px;height:23px;background:#433938;"></div>
<div style="left:333px;top:78px;width:1px;height:24px;background:#352e2d;"></div>
<span class="m" style="left:345px;top:80px">m</span>
<span class="t" style="left:363px;top:81px;color:#d0d4d4;">youshop</span>
<svg class="i" style="left:418px;top:87px" width="8" height="8" viewBox="0 0 8 8"><path d="M1 1l6 6M7 1l-6 6" stroke="#6f8a86" stroke-width="1.300"/></svg>
<svg class="i" style="left:446px;top:81px" width="16" height="21" viewBox="0 0 16 21"><path d="M1.900 1.900h6.600l2.700 2.700v10.500h-9.300z" fill="none" stroke="#9c9ca8" stroke-width="1.800"/><path d="M8.200 1.500v3.300h3.300z" fill="#9c9ca8"/><rect x="1" y="6" width="13" height="7" fill="#f4825e"/></svg>
<span class="s jsp" style="left:447.500px;top:87.500px">JSP</span>
<span class="t" style="left:464px;top:81px;color:#5f95cf;">index.jsp</span>
<svg class="i" style="left:533px;top:87px" width="8" height="8" viewBox="0 0 8 8"><path d="M1 1l6 6M7 1l-6 6" stroke="#6f8a86" stroke-width="1.300"/></svg>
<div style="left:338px;top:109px;width:32px;height:19px;background:#5f7d84;"></div>
<div style="left:374px;top:109px;width:32px;height:19px;background:#5f7d84;"></div>
<div style="left:410px;top:109px;width:16px;height:19px;background:#6e6238;"></div>
<span class="e bc" style="left:338px;top:110px">html</span>
<span class="e bc" style="left:374px;top:110px">body</span>
<span class="e bc" style="left:410px;top:110px">h2</span>
<div style="left:334px;top:132px;width:647px;height:1px;background:#4a625a;"></div>
<div style="left:358px;top:133px;width:1px;height:564px;background:#4a5c56;"></div>
<span class="e" style="left:364px;top:135px"><span style="color:#e8bf6a">&lt;html&gt;</span></span>
<svg class="i" style="left:354px;top:140px" width="10" height="10" viewBox="0 0 10 10"><path d="M0.5 0.5h8v5.5l-4 3.7l-4-3.7z" fill="#313131" stroke="#566a64" stroke-width="1"/><path d="M2.5 3.5h4" stroke="#6a7c77" stroke-width="1"/></svg>
<span class="e" style="left:364px;top:153px"><span style="color:#e8bf6a">&lt;body&gt;</span></span>
<svg class="i" style="left:354px;top:158px" width="10" height="10" viewBox="0 0 10 10"><path d="M0.5 0.5h8v5.5l-4 3.7l-4-3.7z" fill="#313131" stroke="#566a64" stroke-width="1"/><path d="M2.5 3.5h4" stroke="#6a7c77" stroke-width="1"/></svg>
<span class="e" style="left:364px;top:171px"><span style="color:#e8bf6a">&lt;h2&gt;</span><span style="color:#b9c3cf">Hello World,this is Maven project!</span><span style="color:#e8bf6a">&lt;/h2&gt;</span></span>
<span class="e" style="left:364px;top:189px"><span style="color:#e8bf6a">&lt;/body&gt;</span></span>
<svg class="i" style="left:354px;top:193px" width="10" height="10" viewBox="0 0 10 10"><path d="M0.5 9.5h8v-5.5l-4-3.7l-4 3.7z" fill="#313131" stroke="#566a64" stroke-width="1"/><path d="M2.5 5.5h4" stroke="#6a7c77" stroke-width="1"/></svg>
<span class="e" style="left:364px;top:207px"><span style="color:#e8bf6a">&lt;/html&gt;</span></span>
<svg class="i" style="left:354px;top:211px" width="10" height="10" viewBox="0 0 10 10"><path d="M0.5 9.5h8v-5.5l-4-3.7l-4 3.7z" fill="#313131" stroke="#566a64" stroke-width="1"/><path d="M2.5 5.5h4" stroke="#6a7c77" stroke-width="1"/></svg>
<div style="left:350px;top:170px;width:8px;height:17px;background:#3f3735;border-left:1px solid #574b46;border-bottom:1px solid #574b46"></div>
<svg class="i" style="left:967px;top:134px" width="12" height="11" viewBox="0 0 12 11"><path d="M1.800 5l3 3.300l6-6.300" fill="none" stroke="#68a83e" stroke-width="2.800"/></svg>
<div style="left:963px;top:185px;width:2px;height:18px;background:#3a88a8;"></div>
<div style="left:764px;top:329px;width:3px;height:1px;background:#d6ced6;"></div>
<div style="left:768px;top:329px;width:3px;height:1px;background:#d6ced6;"></div>
<div style="left:767px;top:330px;width:1px;height:14px;background:#d6ced6;"></div>
<div style="left:764px;top:344px;width:3px;height:1px;background:#d6ced6;"></div>
<div style="left:768px;top:344px;width:3px;height:1px;background:#d6ced6;"></div>
<div style="left:981px;top:78px;width:1px;height:619px;background:#3a3332;"></div>
<div style="left:982px;top:101px;width:362px;height:1px;background:#352e2d;"></div>
<div style="left:982px;top:131px;width:362px;height:1px;background:#352e2d;"></div>
<span class="h" style="left:987px;top:80px;color:#b4bac0;">Maven Projects</span>
<svg class="i" style="left:1295px;top:81px" width="16" height="16" viewBox="0 0 16 16"><path d="M13.86 6.69L13.86 9.31L12.23 9.23L11.86 10.12L13.07 11.21L11.21 13.07L10.12 11.86L9.23 12.23L9.31 13.86L6.69 13.86L6.77 12.23L5.88 11.86L4.79 13.07L2.93 11.21L4.14 10.12L3.77 9.23L2.14 9.31L2.14 6.69L3.77 6.77L4.14 5.88L2.93 4.79L4.79 2.93L5.88 4.14L6.77 3.77L6.69 2.14L9.31 2.14L9.23 3.77L10.12 4.14L11.21 2.93L13.07 4.79L11.86 5.88L12.23 6.77z" fill="#9a9e9d"/><circle cx="7.500" cy="8" r="1.848" fill="#433938"/></svg>
<svg class="i" style="left:1311px;top:88px" width="6" height="4" viewBox="0 0 6 4"><path d="M0 0h6l-3 3.600z" fill="#9a9e9d"/></svg>
<svg class="i" style="left:1324px;top:82px" width="13" height="13" viewBox="0 0 13 13"><rect x="10" y="0.600" width="2.300" height="11.500" fill="none" stroke="#9a9e9d" stroke-width="1.200"/><path d="M0 5h7.500" stroke="#9a9e9d" stroke-width="1.300"/><path d="M4.500 2l3 3l-3 3" fill="none" stroke="#9a9e9d" stroke-width="1.300"/></svg>
<div style="left:1062px;top:106px;width:1px;height:23px;background:repeating-linear-gradient(to bottom,#56716c 0,#56716c 1px,transparent 1px,transparent 3px)"></div>
<div style="left:1093px;top:106px;width:1px;height:23px;background:repeating-linear-gradient(to bottom,#56716c 0,#56716c 1px,transparent 1px,transparent 3px)"></div>
<div style="left:1249px;top:106px;width:1px;height:23px;background:repeating-linear-gradient(to bottom,#56716c 0,#56716c 1px,transparent 1px,transparent 3px)"></div>
<svg class="i" style="left:988px;top:108px" width="16" height="16" viewBox="0 0 16 16"><g transform="translate(1 1)"><path d="M6.300 1.200a5.800 5.800 0 0 0-3.600 10" fill="none" stroke="#4a96dc" stroke-width="2.300"/><path d="M0.200 14h6.800v-6z" fill="#3f8ed8"/><path d="M7.700 12.800a5.800 5.800 0 0 0 3.600-10" fill="none" stroke="#3f8ed8" stroke-width="2.300"/><path d="M13.800 0h-6.800v6z" fill="#62aaea"/></g></svg>
<svg class="i" style="left:1013px;top:107px" width="16" height="21" viewBox="0 0 16 21"><path d="M0 5v-1.200l0.800-0.800h5.200l2 2z" fill="#c8a46e"/><rect x="1.100" y="6.100" width="11.800" height="7.800" fill="none" stroke="#c8a46e" stroke-width="2.200"/><rect x="6" y="9.500" width="10" height="9" fill="#433938"/><path d="M7 13h6l-2-2.500M15 15.500h-6l2 2.500" fill="none" stroke="#4f9fd6" stroke-width="1.800"/></svg>
<svg class="i" style="left:1039px;top:108px" width="17" height="17" viewBox="0 0 17 17"><path d="M7.500 0v8" stroke="#3fae4c" stroke-width="3"/><path d="M3 6h9l-4.500 5z" fill="#3fae4c"/><path d="M1.500 9v5h12v-5" fill="none" stroke="#8f9593" stroke-width="2"/><path d="M11 13h5.500l-2.750 3.200z" fill="#e8e8e8"/></svg>
<svg class="i" style="left:1070px;top:109px" width="14" height="14" viewBox="0 0 14 14"><path d="M7 1v12M1 7h12" stroke="#3fae4c" stroke-width="2.200"/></svg>
<svg class="i" style="left:1101px;top:108px" width="16" height="16" viewBox="0 0 16 16"><path d="M2.500 1l11 7l-11 7z" fill="#3fae4c"/></svg>
<svg class="i" style="left:1126px;top:108px" width="16" height="16" viewBox="0 0 16 16"><rect x="0.750" y="1.500" width="13" height="10.500" fill="#352e2d" stroke="#8f9593" stroke-width="1.500"/><rect x="0" y="1" width="14.500" height="3" fill="#8f9593"/></svg>
<span class="t" style="left:1130px;top:106px;color:#4f9fd6;font:italic bold 15px/21px 'Liberation Sans',sans-serif;letter-spacing:0">m</span>
<svg class="i" style="left:1150px;top:108px" width="16" height="16" viewBox="0 0 16 16"><rect x="0.500" y="5.500" width="14" height="5" fill="#3f8fd0"/><path d="M4 15l3.500-14M8 15l3.500-14" stroke="#b8bcbb" stroke-width="1.300"/></svg>
<svg class="i" style="left:1176px;top:108px" width="16" height="16" viewBox="0 0 16 16"><circle cx="7.500" cy="8" r="7" fill="#a8d4f5"/><circle cx="7.500" cy="8" r="6.200" fill="none" stroke="#4f9fd6" stroke-width="1.400"/><path d="M9 2.500l-4.500 6.500h3l-1 4.500l4.500-6.500h-3z" fill="#26282a"/></svg>
<svg class="i" style="left:1201px;top:109px" width="16" height="16" viewBox="0 0 16 16"><rect x="1" y="1" width="12" height="12" fill="none" stroke="#d0d4d3" stroke-width="1" stroke-dasharray="1 1.500"/><rect x="0" y="0" width="3.500" height="3.500" fill="#3fae4c"/><rect x="11" y="11" width="3.500" height="3.500" fill="#3fae4c"/><rect x="9" y="0" width="5.500" height="5" fill="#d9a343"/><rect x="0" y="9.500" width="5.500" height="5" fill="#d9a343"/><path d="M4.500 10l5-5M6.500 4.500h3.500v3.500" fill="none" stroke="#9a9e9d" stroke-width="1.400"/></svg>
<svg class="i" style="left:1226px;top:108px" width="14" height="15" viewBox="0 0 14 15"><path d="M1 6h12M1 9h12" stroke="#b8bcbb" stroke-width="1.500"/><path d="M4 0.500h6l-3 4zM4 14.500h6l-3-4z" fill="#3f8fd0"/></svg>
<svg class="i" style="left:1256px;top:108px" width="17" height="17" viewBox="0 0 17 17"><rect x="1" y="1" width="9.500" height="9" fill="none" stroke="#8f9593" stroke-width="1.500"/><circle cx="6" cy="6" r="2.300" fill="none" stroke="#f0a020" stroke-width="1.800"/><path d="M6.500 15l5-5" stroke="#b0b4b3" stroke-width="2.400" stroke-linecap="round"/><path d="M15.800 6.500a3.200 3.200 0 1 1-3-2l-1.200 2.400l2 1.200z" fill="#b0b4b3"/></svg>
<div style="left:983px;top:133px;width:348px;height:551px;overflow:hidden">
<svg class="i" style="position:absolute;left:22px;top:2px" width="16" height="21" viewBox="0 0 16 21"><path d="M0 6h9.600l-4.800 8.300z" fill="#a9abac"/></svg><svg class="i" style="position:absolute;left:42px;top:2px" width="16" height="21" viewBox="0 0 16 21"><path d="M0 5v-1.200l0.800-0.800h5.200l2 2z" fill="#c8a46e"/><rect x="1.100" y="6.100" width="11.800" height="7.800" fill="none" stroke="#c8a46e" stroke-width="2.200"/><circle cx="10.700" cy="12.600" r="5.100" fill="#433938"/><path d="M15.09 11.62L15.09 13.58L13.87 13.52L13.59 14.19L14.50 15.01L13.11 16.40L12.29 15.49L11.62 15.77L11.68 16.99L9.72 16.99L9.78 15.77L9.11 15.49L8.29 16.40L6.90 15.01L7.81 14.19L7.53 13.52L6.31 13.58L6.31 11.62L7.53 11.68L7.81 11.01L6.90 10.19L8.29 8.80L9.11 9.71L9.78 9.43L9.72 8.21L11.68 8.21L11.62 9.43L12.29 9.71L13.11 8.80L14.50 10.19L13.59 11.01L13.87 11.68z" fill="#3f9fe0"/><circle cx="10.7" cy="12.6" r="1.5" fill="#433938"/></svg><span class="t" style="position:absolute;left:60px;top:2px;color:#d0d4d4">Lifecycle</span>
<svg class="i" style="position:absolute;left:60.5px;top:23px" width="16" height="21" viewBox="0 0 16 21"><path d="M13.95 7.87L13.95 10.53L12.32 10.46L11.94 11.37L13.15 12.47L11.27 14.35L10.17 13.14L9.26 13.52L9.33 15.15L6.67 15.15L6.74 13.52L5.83 13.14L4.73 14.35L2.85 12.47L4.06 11.37L3.68 10.46L2.05 10.53L2.05 7.87L3.68 7.94L4.06 7.03L2.85 5.93L4.73 4.05L5.83 5.26L6.74 4.88L6.67 3.25L9.33 3.25L9.26 4.88L10.17 5.26L11.27 4.05L13.15 5.93L11.94 7.03L12.32 7.94z" fill="#3f9be0"/><circle cx="8" cy="9.2" r="2.1" fill="#433938"/></svg><span class="t" style="position:absolute;left:80px;top:23px;color:#d0d4d4">clean</span>
<svg class="i" style="position:absolute;left:60.5px;top:44px" width="16" height="21" viewBox="0 0 16 21"><path d="M13.95 7.87L13.95 10.53L12.32 10.46L11.94 11.37L13.15 12.47L11.27 14.35L10.17 13.14L9.26 13.52L9.33 15.15L6.67 15.15L6.74 13.52L5.83 13.14L4.73 14.35L2.85 12.47L4.06 11.37L3.68 10.46L2.05 10.53L2.05 7.87L3.68 7.94L4.06 7.03L2.85 5.93L4.73 4.05L5.83 5.26L6.74 4.88L6.67 3.25L9.33 3.25L9.26 4.88L10.17 5.26L11.27 4.05L13.15 5.93L11.94 7.03L12.32 7.94z" fill="#3f9be0"/><circle cx="8" cy="9.2" r="2.1" fill="#433938"/></svg><span class="t" style="position:absolute;left:80px;top:44px;color:#d0d4d4">validate</span>
<svg class="i" style="position:absolute;left:60.5px;top:65px" width="16" height="21" viewBox="0 0 16 21"><path d="M13.95 7.87L13.95 10.53L12.32 10.46L11.94 11.37L13.15 12.47L11.27 14.35L10.17 13.14L9.26 13.52L9.33 15.15L6.67 15.15L6.74 13.52L5.83 13.14L4.73 14.35L2.85 12.47L4.06 11.37L3.68 10.46L2.05 10.53L2.05 7.87L3.68 7.94L4.06 7.03L2.85 5.93L4.73 4.05L5.83 5.26L6.74 4.88L6.67 3.25L9.33 3.25L9.26 4.88L10.17 5.26L11.27 4.05L13.15 5.93L11.94 7.03L12.32 7.94z" fill="#3f9be0"/><circle cx="8" cy="9.2" r="2.1" fill="#433938"/></svg><span class="t" style="position:absolute;left:80px;top:65px;color:#d0d4d4">compile</span>
<svg class="i" style="position:absolute;left:60.5px;top:86px" width="16" height="21" viewBox="0 0 16 21"><path d="M13.95 7.87L13.95 10.53L12.32 10.46L11.94 11.37L13.15 12.47L11.27 14.35L10.17 13.14L9.26 13.52L9.33 15.15L6.67 15.15L6.74 13.52L5.83 13.14L4.73 14.35L2.85 12.47L4.06 11.37L3.68 10.46L2.05 10.53L2.05 7.87L3.68 7.94L4.06 7.03L2.85 5.93L4.73 4.05L5.83 5.26L6.74 4.88L6.67 3.25L9.33 3.25L9.26 4.88L10.17 5.26L11.27 4.05L13.15 5.93L11.94 7.03L12.32 7.94z" fill="#3f9be0"/><circle cx="8" cy="9.2" r="2.1" fill="#433938"/></svg><span class="t" style="position:absolute;left:80px;top:86px;color:#d0d4d4">test</span>
<svg class="i" style="position:absolute;left:60.5px;top:107px" width="16" height="21" viewBox="0 0 16 21"><path d="M13.95 7.87L13.95 10.53L12.32 10.46L11.94 11.37L13.15 12.47L11.27 14.35L10.17 13.14L9.26 13.52L9.33 15.15L6.67 15.15L6.74 13.52L5.83 13.14L4.73 14.35L2.85 12.47L4.06 11.37L3.68 10.46L2.05 10.53L2.05 7.87L3.68 7.94L4.06 7.03L2.85 5.93L4.73 4.05L5.83 5.26L6.74 4.88L6.67 3.25L9.33 3.25L9.26 4.88L10.17 5.26L11.27 4.05L13.15 5.93L11.94 7.03L12.32 7.94z" fill="#3f9be0"/><circle cx="8" cy="9.2" r="2.1" fill="#433938"/></svg><span class="t" style="position:absolute;left:80px;top:107px;color:#d0d4d4">package</span>
<svg class="i" style="position:absolute;left:60.5px;top:128px" width="16" height="21" viewBox="0 0 16 21"><path d="M13.95 7.87L13.95 10.53L12.32 10.46L11.94 11.37L13.15 12.47L11.27 14.35L10.17 13.14L9.26 13.52L9.33 15.15L6.67 15.15L6.74 13.52L5.83 13.14L4.73 14.35L2.85 12.47L4.06 11.37L3.68 10.46L2.05 10.53L2.05 7.87L3.68 7.94L4.06 7.03L2.85 5.93L4.73 4.05L5.83 5.26L6.74 4.88L6.67 3.25L9.33 3.25L9.26 4.88L10.17 5.26L11.27 4.05L13.15 5.93L11.94 7.03L12.32 7.94z" fill="#3f9be0"/><circle cx="8" cy="9.2" r="2.1" fill="#433938"/></svg><span class="t" style="position:absolute;left:80px;top:128px;color:#d0d4d4">verify</span>
<svg class="i" style="position:absolute;left:60.5px;top:149px" width="16" height="21" viewBox="0 0 16 21"><path d="M13.95 7.87L13.95 10.53L12.32 10.46L11.94 11.37L13.15 12.47L11.27 14.35L10.17 13.14L9.26 13.52L9.33 15.15L6.67 15.15L6.74 13.52L5.83 13.14L4.73 14.35L2.85 12.47L4.06 11.37L3.68 10.46L2.05 10.53L2.05 7.87L3.68 7.94L4.06 7.03L2.85 5.93L4.73 4.05L5.83 5.26L6.74 4.88L6.67 3.25L9.33 3.25L9.26 4.88L10.17 5.26L11.27 4.05L13.15 5.93L11.94 7.03L12.32 7.94z" fill="#3f9be0"/><circle cx="8" cy="9.2" r="2.1" fill="#433938"/></svg><span class="t" style="position:absolute;left:80px;top:149px;color:#d0d4d4">install</span>
<svg class="i" style="position:absolute;left:60.5px;top:170px" width="16" height="21" viewBox="0 0 16 21"><path d="M13.95 7.87L13.95 10.53L12.32 10.46L11.94 11.37L13.15 12.47L11.27 14.35L10.17 13.14L9.26 13.52L9.33 15.15L6.67 15.15L6.74 13.52L5.83 13.14L4.73 14.35L2.85 12.47L4.06 11.37L3.68 10.46L2.05 10.53L2.05 7.87L3.68 7.94L4.06 7.03L2.85 5.93L4.73 4.05L5.83 5.26L6.74 4.88L6.67 3.25L9.33 3.25L9.26 4.88L10.17 5.26L11.27 4.05L13.15 5.93L11.94 7.03L12.32 7.94z" fill="#3f9be0"/><circle cx="8" cy="9.2" r="2.1" fill="#433938"/></svg><span class="t" style="position:absolute;left:80px;top:170px;color:#d0d4d4">site</span>
<svg class="i" style="position:absolute;left:60.5px;top:191px" width="16" height="21" viewBox="0 0 16 21"><path d="M13.95 7.87L13.95 10.53L12.32 10.46L11.94 11.37L13.15 12.47L11.27 14.35L10.17 13.14L9.26 13.52L9.33 15.15L6.67 15.15L6.74 13.52L5.83 13.14L4.73 14.35L2.85 12.47L4.06 11.37L3.68 10.46L2.05 10.53L2.05 7.87L3.68 7.94L4.06 7.03L2.85 5.93L4.73 4.05L5.83 5.26L6.74 4.88L6.67 3.25L9.33 3.25L9.26 4.88L10.17 5.26L11.27 4.05L13.15 5.93L11.94 7.03L12.32 7.94z" fill="#3f9be0"/><circle cx="8" cy="9.2" r="2.1" fill="#433938"/></svg><span class="t" style="position:absolute;left:80px;top:191px;color:#d0d4d4">deploy</span>
<svg class="i" style="position:absolute;left:22px;top:212px" width="16" height="21" viewBox="0 0 16 21"><path d="M0 6h9.600l-4.800 8.300z" fill="#a9abac"/></svg><svg class="i" style="position:absolute;left:42px;top:212px" width="16" height="21" viewBox="0 0 16 21"><path d="M0 5v-1.200l0.800-0.800h5.200l2 2z" fill="#c8a46e"/><rect x="1.100" y="6.100" width="11.800" height="7.800" fill="none" stroke="#c8a46e" stroke-width="2.200"/><circle cx="10.700" cy="12.600" r="5.100" fill="#433938"/><path d="M15.09 11.62L15.09 13.58L13.87 13.52L13.59 14.19L14.50 15.01L13.11 16.40L12.29 15.49L11.62 15.77L11.68 16.99L9.72 16.99L9.78 15.77L9.11 15.49L8.29 16.40L6.90 15.01L7.81 14.19L7.53 13.52L6.31 13.58L6.31 11.62L7.53 11.68L7.81 11.01L6.90 10.19L8.29 8.80L9.11 9.71L9.78 9.43L9.72 8.21L11.68 8.21L11.62 9.43L12.29 9.71L13.11 8.80L14.50 10.19L13.59 11.01L13.87 11.68z" fill="#3f9fe0"/><circle cx="10.7" cy="12.6" r="1.5" fill="#433938"/></svg><span class="t" style="position:absolute;left:60px;top:212px;color:#d0d4d4">Plugins</span>
<svg class="i" style="position:absolute;left:42px;top:233px" width="16" height="21" viewBox="0 0 16 21"><path d="M1 5l8 4.500l-8 4.500z" fill="#a9abac"/></svg><svg class="i" style="position:absolute;left:62px;top:233px" width="16" height="21" viewBox="0 0 16 21"><g transform="translate(6.5 7.5) scale(1.0)"><path d="M1 -2.200l2.600 -2.900M3 -0.300l2.800 -2.800" stroke="#a4acac" stroke-width="1.400"/><path d="M-3 3.200l-2.600 3" stroke="#a4acac" stroke-width="1.500"/><path d="M-2.300 -3.200l5.600 5.200l-1.500 1.800c-2 1.500-4.500 1-5.500-0.600c-1-2-0.300-4.500 1.400-6.400z" fill="#f4a830"/><path d="M-2.600 -3.600l6.300 5.800" stroke="#f0b848" stroke-width="1.300"/></g></svg><span class="pm" style="position:absolute;left:65.5px;top:237px">m</span><span class="t" style="position:absolute;left:80px;top:233px;color:#d0d4d4">antrun<span style="color:#8d9492"> (org.apache.maven.plugins:maven-</span></span>
<svg class="i" style="position:absolute;left:42px;top:254px" width="16" height="21" viewBox="0 0 16 21"><path d="M1 5l8 4.500l-8 4.500z" fill="#a9abac"/></svg><svg class="i" style="position:absolute;left:62px;top:254px" width="16" height="21" viewBox="0 0 16 21"><g transform="translate(6.5 7.5) scale(1.0)"><path d="M1 -2.200l2.600 -2.900M3 -0.300l2.800 -2.800" stroke="#a4acac" stroke-width="1.400"/><path d="M-3 3.200l-2.600 3" stroke="#a4acac" stroke-width="1.500"/><path d="M-2.300 -3.200l5.600 5.200l-1.500 1.800c-2 1.500-4.500 1-5.500-0.600c-1-2-0.300-4.500 1.400-6.400z" fill="#f4a830"/><path d="M-2.600 -3.600l6.300 5.800" stroke="#f0b848" stroke-width="1.300"/></g></svg><span class="pm" style="position:absolute;left:65.5px;top:258px">m</span><span class="t" style="position:absolute;left:80px;top:254px;color:#d0d4d4">clean<span style="color:#8d9492"> (org.apache.maven.plugins:maven-c</span></span>
<svg class="i" style="position:absolute;left:42px;top:275px" width="16" height="21" viewBox="0 0 16 21"><path d="M1 5l8 4.500l-8 4.500z" fill="#a9abac"/></svg><svg class="i" style="position:absolute;left:62px;top:275px" width="16" height="21" viewBox="0 0 16 21"><g transform="translate(6.5 7.5) scale(1.0)"><path d="M1 -2.200l2.600 -2.900M3 -0.300l2.800 -2.800" stroke="#a4acac" stroke-width="1.400"/><path d="M-3 3.200l-2.600 3" stroke="#a4acac" stroke-width="1.500"/><path d="M-2.300 -3.200l5.600 5.200l-1.500 1.800c-2 1.500-4.500 1-5.500-0.600c-1-2-0.300-4.500 1.400-6.400z" fill="#f4a830"/><path d="M-2.600 -3.600l6.300 5.800" stroke="#f0b848" stroke-width="1.300"/></g></svg><span class="pm" style="position:absolute;left:65.5px;top:279px">m</span><span class="t" style="position:absolute;left:80px;top:275px;color:#d0d4d4">compiler<span style="color:#8d9492"> (org.apache.maven.plugins:mave</span></span>
<svg class="i" style="position:absolute;left:42px;top:296px" width="16" height="21" viewBox="0 0 16 21"><path d="M1 5l8 4.500l-8 4.500z" fill="#a9abac"/></svg><svg class="i" style="position:absolute;left:62px;top:296px" width="16" height="21" viewBox="0 0 16 21"><g transform="translate(6.5 7.5) scale(1.0)"><path d="M1 -2.200l2.600 -2.900M3 -0.300l2.800 -2.800" stroke="#a4acac" stroke-width="1.400"/><path d="M-3 3.200l-2.600 3" stroke="#a4acac" stroke-width="1.500"/><path d="M-2.300 -3.200l5.600 5.200l-1.500 1.800c-2 1.500-4.500 1-5.500-0.600c-1-2-0.300-4.500 1.400-6.400z" fill="#f4a830"/><path d="M-2.600 -3.600l6.300 5.800" stroke="#f0b848" stroke-width="1.300"/></g></svg><span class="pm" style="position:absolute;left:65.5px;top:300px">m</span><span class="t" style="position:absolute;left:80px;top:296px;color:#d0d4d4">dependency<span style="color:#8d9492"> (org.apache.maven.plugins:ma</span></span>
<svg class="i" style="position:absolute;left:42px;top:317px" width="16" height="21" viewBox="0 0 16 21"><path d="M1 5l8 4.500l-8 4.500z" fill="#a9abac"/></svg><svg class="i" style="position:absolute;left:62px;top:317px" width="16" height="21" viewBox="0 0 16 21"><g transform="translate(6.5 7.5) scale(1.0)"><path d="M1 -2.200l2.600 -2.900M3 -0.300l2.800 -2.800" stroke="#a4acac" stroke-width="1.400"/><path d="M-3 3.200l-2.600 3" stroke="#a4acac" stroke-width="1.500"/><path d="M-2.300 -3.200l5.600 5.200l-1.500 1.800c-2 1.500-4.500 1-5.500-0.600c-1-2-0.300-4.500 1.400-6.400z" fill="#f4a830"/><path d="M-2.600 -3.600l6.300 5.800" stroke="#f0b848" stroke-width="1.300"/></g></svg><span class="pm" style="position:absolute;left:65.5px;top:321px">m</span><span class="t" style="position:absolute;left:80px;top:317px;color:#d0d4d4">deploy<span style="color:#8d9492"> (org.apache.maven.plugins:maven-</span></span>
<svg class="i" style="position:absolute;left:42px;top:338px" width="16" height="21" viewBox="0 0 16 21"><path d="M1 5l8 4.500l-8 4.500z" fill="#a9abac"/></svg><svg class="i" style="position:absolute;left:62px;top:338px" width="16" height="21" viewBox="0 0 16 21"><g transform="translate(6.5 7.5) scale(1.0)"><path d="M1 -2.200l2.600 -2.900M3 -0.300l2.800 -2.800" stroke="#a4acac" stroke-width="1.400"/><path d="M-3 3.200l-2.600 3" stroke="#a4acac" stroke-width="1.500"/><path d="M-2.300 -3.200l5.600 5.200l-1.500 1.800c-2 1.500-4.500 1-5.500-0.600c-1-2-0.300-4.500 1.400-6.400z" fill="#f4a830"/><path d="M-2.600 -3.600l6.300 5.800" stroke="#f0b848" stroke-width="1.300"/></g></svg><span class="pm" style="position:absolute;left:65.5px;top:342px">m</span><span class="t" style="position:absolute;left:80px;top:338px;color:#d0d4d4">install<span style="color:#8d9492"> (org.apache.maven.plugins:maven</span></span>
<svg class="i" style="position:absolute;left:42px;top:359px" width="16" height="21" viewBox="0 0 16 21"><path d="M1 5l8 4.500l-8 4.500z" fill="#a9abac"/></svg><svg class="i" style="position:absolute;left:62px;top:359px" width="16" height="21" viewBox="0 0 16 21"><g transform="translate(6.5 7.5) scale(1.0)"><path d="M1 -2.200l2.600 -2.900M3 -0.300l2.800 -2.800" stroke="#a4acac" stroke-width="1.400"/><path d="M-3 3.200l-2.600 3" stroke="#a4acac" stroke-width="1.500"/><path d="M-2.300 -3.200l5.600 5.200l-1.500 1.800c-2 1.500-4.500 1-5.500-0.600c-1-2-0.300-4.500 1.400-6.400z" fill="#f4a830"/><path d="M-2.600 -3.600l6.300 5.800" stroke="#f0b848" stroke-width="1.300"/></g></svg><span class="pm" style="position:absolute;left:65.5px;top:363px">m</span><span class="t" style="position:absolute;left:80px;top:359px;color:#d0d4d4">jetty<span style="color:#8d9492"> (org.mortbay.jetty:maven-jetty-pl</span></span>
<svg class="i" style="position:absolute;left:42px;top:380px" width="16" height="21" viewBox="0 0 16 21"><path d="M1 5l8 4.500l-8 4.500z" fill="#a9abac"/></svg><svg class="i" style="position:absolute;left:62px;top:380px" width="16" height="21" viewBox="0 0 16 21"><g transform="translate(6.5 7.5) scale(1.0)"><path d="M1 -2.200l2.600 -2.900M3 -0.300l2.800 -2.800" stroke="#a4acac" stroke-width="1.400"/><path d="M-3 3.200l-2.600 3" stroke="#a4acac" stroke-width="1.500"/><path d="M-2.300 -3.200l5.600 5.200l-1.500 1.800c-2 1.500-4.500 1-5.500-0.600c-1-2-0.300-4.500 1.400-6.400z" fill="#f4a830"/><path d="M-2.600 -3.600l6.300 5.800" stroke="#f0b848" stroke-width="1.300"/></g></svg><span class="pm" style="position:absolute;left:65.5px;top:384px">m</span><span class="t" style="position:absolute;left:80px;top:380px;color:#d0d4d4">resources<span style="color:#8d9492"> (org.apache.maven.plugins:mav</span></span>
<svg class="i" style="position:absolute;left:42px;top:401px" width="16" height="21" viewBox="0 0 16 21"><path d="M1 5l8 4.500l-8 4.500z" fill="#a9abac"/></svg><svg class="i" style="position:absolute;left:62px;top:401px" width="16" height="21" viewBox="0 0 16 21"><g transform="translate(6.5 7.5) scale(1.0)"><path d="M1 -2.200l2.600 -2.900M3 -0.300l2.800 -2.800" stroke="#a4acac" stroke-width="1.400"/><path d="M-3 3.200l-2.600 3" stroke="#a4acac" stroke-width="1.500"/><path d="M-2.300 -3.200l5.600 5.200l-1.500 1.800c-2 1.500-4.500 1-5.500-0.600c-1-2-0.300-4.500 1.400-6.400z" fill="#f4a830"/><path d="M-2.600 -3.600l6.300 5.800" stroke="#f0b848" stroke-width="1.300"/></g></svg><span class="pm" style="position:absolute;left:65.5px;top:405px">m</span><span class="t" style="position:absolute;left:80px;top:401px;color:#d0d4d4">site<span style="color:#8d9492"> (org.apache.maven.plugins:maven-si</span></span>
<svg class="i" style="position:absolute;left:42px;top:422px" width="16" height="21" viewBox="0 0 16 21"><path d="M1 5l8 4.500l-8 4.500z" fill="#a9abac"/></svg><svg class="i" style="position:absolute;left:62px;top:422px" width="16" height="21" viewBox="0 0 16 21"><g transform="translate(6.5 7.5) scale(1.0)"><path d="M1 -2.200l2.600 -2.900M3 -0.300l2.800 -2.800" stroke="#a4acac" stroke-width="1.400"/><path d="M-3 3.200l-2.600 3" stroke="#a4acac" stroke-width="1.500"/><path d="M-2.300 -3.200l5.600 5.200l-1.500 1.800c-2 1.500-4.500 1-5.500-0.600c-1-2-0.300-4.500 1.400-6.400z" fill="#f4a830"/><path d="M-2.600 -3.600l6.300 5.800" stroke="#f0b848" stroke-width="1.300"/></g></svg><span class="pm" style="position:absolute;left:65.5px;top:426px">m</span><span class="t" style="position:absolute;left:80px;top:422px;color:#d0d4d4">source<span style="color:#8d9492"> (org.apache.maven.plugins:maven-</span></span>
<svg class="i" style="position:absolute;left:42px;top:443px" width="16" height="21" viewBox="0 0 16 21"><path d="M1 5l8 4.500l-8 4.500z" fill="#a9abac"/></svg><svg class="i" style="position:absolute;left:62px;top:443px" width="16" height="21" viewBox="0 0 16 21"><g transform="translate(6.5 7.5) scale(1.0)"><path d="M1 -2.200l2.600 -2.900M3 -0.300l2.800 -2.800" stroke="#a4acac" stroke-width="1.400"/><path d="M-3 3.200l-2.600 3" stroke="#a4acac" stroke-width="1.500"/><path d="M-2.300 -3.200l5.600 5.200l-1.500 1.800c-2 1.500-4.500 1-5.500-0.600c-1-2-0.300-4.500 1.400-6.400z" fill="#f4a830"/><path d="M-2.600 -3.600l6.300 5.800" stroke="#f0b848" stroke-width="1.300"/></g></svg><span class="pm" style="position:absolute;left:65.5px;top:447px">m</span><span class="t" style="position:absolute;left:80px;top:443px;color:#d0d4d4">surefire<span style="color:#8d9492"> (org.apache.maven.plugins:mave</span></span>
<svg class="i" style="position:absolute;left:42px;top:464px" width="16" height="21" viewBox="0 0 16 21"><path d="M1 5l8 4.500l-8 4.500z" fill="#a9abac"/></svg><svg class="i" style="position:absolute;left:62px;top:464px" width="16" height="21" viewBox="0 0 16 21"><g transform="translate(6.5 7.5) scale(1.0)"><path d="M1 -2.200l2.600 -2.900M3 -0.300l2.800 -2.800" stroke="#a4acac" stroke-width="1.400"/><path d="M-3 3.200l-2.600 3" stroke="#a4acac" stroke-width="1.500"/><path d="M-2.300 -3.200l5.600 5.200l-1.500 1.800c-2 1.500-4.500 1-5.500-0.600c-1-2-0.300-4.500 1.400-6.400z" fill="#f4a830"/><path d="M-2.600 -3.600l6.300 5.800" stroke="#f0b848" stroke-width="1.300"/></g></svg><span class="pm" style="position:absolute;left:65.5px;top:468px">m</span><span class="t" style="position:absolute;left:80px;top:464px;color:#d0d4d4">tomcat6<span style="color:#8d9492"> (org.apache.tomcat.maven:tomcat</span></span>
<svg class="i" style="position:absolute;left:42px;top:485px" width="16" height="21" viewBox="0 0 16 21"><path d="M0 6h9.600l-4.800 8.300z" fill="#a9abac"/></svg><svg class="i" style="position:absolute;left:62px;top:485px" width="16" height="21" viewBox="0 0 16 21"><g transform="translate(6.5 7.5) scale(1.0)"><path d="M1 -2.200l2.600 -2.900M3 -0.300l2.800 -2.800" stroke="#a4acac" stroke-width="1.400"/><path d="M-3 3.200l-2.600 3" stroke="#a4acac" stroke-width="1.500"/><path d="M-2.300 -3.200l5.600 5.200l-1.500 1.800c-2 1.500-4.500 1-5.500-0.600c-1-2-0.300-4.500 1.400-6.400z" fill="#f4a830"/><path d="M-2.600 -3.600l6.300 5.800" stroke="#f0b848" stroke-width="1.300"/></g></svg><span class="pm" style="position:absolute;left:65.5px;top:489px">m</span><span class="t" style="position:absolute;left:80px;top:485px;color:#d0d4d4">tomcat7<span style="color:#8d9492"> (org.apache.tomcat.maven:tomcat</span></span>
<span class="pm" style="position:absolute;left:82px;top:502px;font-size:12px">m</span><svg class="i" style="position:absolute;left:82px;top:506px" width="16" height="21" viewBox="0 0 16 21"><g transform="translate(8.8 10.8) scale(1.0)"><path d="M1 -2.200l2.600 -2.900M3 -0.300l2.800 -2.800" stroke="#a4acac" stroke-width="1.400"/><path d="M-3 3.200l-2.600 3" stroke="#a4acac" stroke-width="1.500"/><path d="M-2.300 -3.200l5.600 5.200l-1.500 1.800c-2 1.500-4.500 1-5.500-0.600c-1-2-0.300-4.500 1.400-6.400z" fill="#f4a830"/><path d="M-2.600 -3.600l6.300 5.800" stroke="#f0b848" stroke-width="1.300"/></g></svg><span class="t" style="position:absolute;left:100px;top:506px;color:#d0d4d4">tomcat7:deploy</span>
<span class="pm" style="position:absolute;left:82px;top:523px;font-size:12px">m</span><svg class="i" style="position:absolute;left:82px;top:527px" width="16" height="21" viewBox="0 0 16 21"><g transform="translate(8.8 10.8) scale(1.0)"><path d="M1 -2.200l2.600 -2.900M3 -0.300l2.800 -2.800" stroke="#a4acac" stroke-width="1.400"/><path d="M-3 3.200l-2.600 3" stroke="#a4acac" stroke-width="1.500"/><path d="M-2.300 -3.200l5.600 5.200l-1.500 1.800c-2 1.500-4.500 1-5.500-0.600c-1-2-0.300-4.500 1.400-6.400z" fill="#f4a830"/><path d="M-2.600 -3.600l6.300 5.800" stroke="#f0b848" stroke-width="1.300"/></g></svg><span class="t" style="position:absolute;left:100px;top:527px;color:#d0d4d4">tomcat7:deploy-only</span>
</div>
<div style="left:1333px;top:157px;width:10px;height:334px;background:#4c5b55;border-radius:2px"></div>
<div style="left:983px;top:685px;width:218px;height:10px;background:#4c5b55;border-radius:2px"></div>
<div style="left:982px;top:696px;width:382px;height:1px;background:#362f2e;"></div>
<span class="vl" style="left:6px;top:88px;color:#eef0f0">1: Project</span>
<div style="left:17px;top:141px;width:1px;height:6px;background:#eef0f0;"></div>
<svg class="i" style="left:4px;top:151px" width="15" height="14" viewBox="0 0 15 14"><path d="M3.500 2.500h5v5c0 3-2 4-5.500 4" fill="none" stroke="#2f86cc" stroke-width="3.200" stroke-linecap="round" stroke-linejoin="round"/><path d="M12 2.600v8.800" stroke="#2f86cc" stroke-width="3" stroke-linecap="round"/><circle cx="2.300" cy="6.800" r="2" fill="#f08a1c"/></svg>
<span class="vl" style="left:6px;top:187px">7: Structure</span>
<div style="left:17px;top:252px;width:1px;height:6px;background:#b4bac0;"></div>
<svg class="i" style="left:5px;top:262px" width="14" height="15" viewBox="0 0 14 15"><path d="M3 3l4 9l4-10" fill="none" stroke="#9a9e9d" stroke-width="1"/><circle cx="3" cy="3.500" r="2.500" fill="#5b9bd5"/><circle cx="11" cy="3" r="2.500" fill="#e05a5a"/><circle cx="7" cy="11.500" r="2.500" fill="#c9963f"/></svg>
<span class="vl" style="left:6px;top:539px">Web</span>
<svg class="i" style="left:5px;top:561px" width="14" height="14" viewBox="0 0 14 14"><path d="M0.500 9v-8.500h9" fill="none" stroke="#9a9e9d" stroke-width="1.500"/><circle cx="8" cy="8" r="5.500" fill="#3f8fe0"/><path d="M5 6.500c1-2 3-3 5-2c0 2-1 3-2 3.500c-1 1-1 3-2 3c-1-1-1.500-3-1-4.500z" fill="#f0d050"/></svg>
<span class="vl" style="left:6px;top:596px">2: Favorites</span>
<div style="left:17px;top:661px;width:1px;height:6px;background:#b4bac0;"></div>
<svg class="i" style="left:5px;top:671px" width="14" height="14" viewBox="0 0 14 14"><path d="M7 0.500l2 4.300l4.700 0.500l-3.500 3.200l1 4.600l-4.200-2.400l-4.200 2.400l1-4.600l-3.500-3.200l4.700-0.500z" fill="#f09a30"/></svg>
<div style="left:1344px;top:78px;width:1px;height:619px;background:#3a3332;"></div>
<div style="left:1345px;top:78px;width:1px;height:619px;background:#4f625b;"></div>
<div style="left:1345px;top:170px;width:19px;height:126px;background:#313131;"></div>
<div style="left:1345px;top:170px;width:1px;height:126px;background:#3a3332;"></div>
<svg class="i" style="left:1349px;top:89px" width="13" height="14" viewBox="0 0 13 14"><ellipse cx="6.500" cy="3" rx="2" ry="2" fill="#c47fd8"/><ellipse cx="6.500" cy="7" rx="2" ry="2.200" fill="#c47fd8"/><ellipse cx="6.500" cy="11" rx="2.300" ry="2.300" fill="#c47fd8"/><path d="M1 1l4 3M12 1l-4 3M0.500 7h12M1 13l4-3M12 13l-4-3" stroke="#d8d8d8" stroke-width="0.900" fill="none"/></svg>
<span class="vr" style="left:1346px;top:106px">Ant Build</span>
<span class="m" style="left:1349px;top:179px;font-size:15px">m</span>
<span class="vr" style="left:1346px;top:200px;color:#eef0f0">Maven Projects</span>
<div style="left:1362px;top:257px;width:2px;height:200px;background:#050505;"></div>
<div style="left:1363px;top:258px;width:1px;height:198px;background:#1e9cff;"></div>
<svg class="i" style="left:1349px;top:306px" width="14" height="14" viewBox="0 0 14 14"><path d="M0.500 8v-7h7" fill="none" stroke="#5b9bd5" stroke-width="1.500"/><rect x="3.500" y="4" width="9.500" height="9.500" fill="none" stroke="#a8acab" stroke-width="1.200"/><path d="M3.500 7.500h9.500M3.500 10.500h9.500M6.700 4v9.500M9.900 4v9.500" stroke="#a8acab" stroke-width="1"/></svg>
<span class="vr" style="left:1346px;top:325px">Database</span>
<svg class="i" style="left:1349px;top:395px" width="14" height="14" viewBox="0 0 14 14"><path d="M1 4l6-3l4 3l-6 4z" fill="#f0b030"/><path d="M1 4v3l4 4v-3z" fill="#c98020"/><path d="M6 9l2.500 3l5-6" fill="none" stroke="#30c040" stroke-width="2"/></svg>
<span class="vr" style="left:1346px;top:413px">Bean Validation</span>
<svg class="i" style="left:1349px;top:523px" width="14" height="14" viewBox="0 0 14 14"><circle cx="4" cy="4" r="2.500" fill="#e0a030"/><circle cx="8" cy="3" r="2" fill="#c98020"/><circle cx="8.500" cy="8" r="3.500" fill="#f0d050"/><circle cx="9" cy="8.500" r="2" fill="#5b9bd5"/></svg>
<span class="vr" style="left:1346px;top:542px">CDI</span>
<svg class="i" style="left:1350px;top:577px" width="13" height="14" viewBox="0 0 13 14"><path d="M1 0.500h7.500l3 3v9.500h-10.500z" fill="#f4f6f8" stroke="#5b9bd5" stroke-width="1"/><rect x="0.500" y="5" width="11.500" height="6" fill="#3f7fc8"/></svg>
<span class="s" style="left:1352px;top:583px;color:#fff;font-weight:bold;font-size:6.500px;line-height:6px">SF</span>
<span class="vr" style="left:1346px;top:595px">JSF</span>
<div style="left:0px;top:697px;width:1364px;height:1px;background:#50645c;"></div>
<div style="left:0px;top:698px;width:1364px;height:21px;background:#433938;"></div>
<div style="left:0px;top:719px;width:1364px;height:1px;background:#48554f;"></div>
<div style="left:0px;top:720px;width:1364px;height:19px;background:#433938;"></div>
<svg class="i" style="left:32px;top:701px" width="13" height="14" viewBox="0 0 13 14"><rect x="0.500" y="0.500" width="12" height="12.500" fill="#f0b070" stroke="#f8d8b0" stroke-width="1"/><path d="M2.500 4h8M2.500 6.500h8M2.500 9h8" stroke="#8a6a3a" stroke-width="1.200" stroke-dasharray="3 1"/></svg>
<span class="q" style="left:49px;top:699px"><u>0</u>: Messages</span>
<svg class="i" style="left:137px;top:701px" width="12" height="14" viewBox="0 0 12 14"><path d="M1 0.500l10.500 6.700l-10.500 6.700z" fill="#3fae4c"/></svg>
<span class="q" style="left:154px;top:699px"><u>4</u>: Run</span>
<svg class="i" style="left:209px;top:701px" width="15" height="15" viewBox="0 0 15 15"><path d="M2 0.500l3 3M2 14l3-3M9 0.500l-2 3M9 14l-2-3" stroke="#b0b4b3" stroke-width="1"/><ellipse cx="5.500" cy="7.200" rx="5" ry="5.200" fill="#3fae4c"/><path d="M9 4.500c1.500 0 3 1.200 3 2.700s-1.500 2.700-3 2.700z" fill="#b0b4b3"/><path d="M13 5.500v3.500" stroke="#b0b4b3" stroke-width="1"/></svg>
<span class="q" style="left:227px;top:699px"><u>5</u>: Debug</span>
<svg class="i" style="left:296px;top:701px" width="14" height="14" viewBox="0 0 14 14"><circle cx="3.500" cy="3.500" r="3" fill="#f0f0f0"/><path d="M2 3.500h3" stroke="#555" stroke-width="1"/><path d="M5 5.500a4 3.500 0 0 1 8 0v2h-8z" fill="#8a9098"/><circle cx="9" cy="8" r="3" fill="#f0b070"/><path d="M5 14c0-3 8-3 8 0z" fill="#3f9fe0"/></svg>
<span class="q" style="left:313px;top:699px"><u>6</u>: TODO</span>
<svg class="i" style="left:375px;top:702px" width="13" height="13" viewBox="0 0 13 13"><rect x="0.500" y="0.500" width="12" height="12" fill="#000" stroke="#8f9593" stroke-width="1"/><rect x="0" y="0" width="13" height="2.500" fill="#8f9593"/><path d="M2.500 5l3 2.500l-3 2.500" fill="none" stroke="#fff" stroke-width="1.200"/><path d="M7 10.500h3.500" stroke="#fff" stroke-width="1.200"/></svg>
<span class="q" style="left:392px;top:699px">Terminal</span>
<svg class="i" style="left:464px;top:701px" width="14" height="14" viewBox="0 0 14 14"><rect x="0" y="0" width="8.500" height="9" fill="#4a8fd8"/><circle cx="8" cy="8.500" r="5.200" fill="#f0a040"/><path d="M3 6.500l4-3.500v2.500h3v4h-3v1z" fill="#3fae4c"/></svg>
<span class="q" style="left:481px;top:699px"><u>9</u>: Version Control</span>
<svg class="i" style="left:615px;top:701px" width="14" height="14" viewBox="0 0 14 14"><rect x="0.500" y="0.500" width="8" height="10" fill="#e8f0f8" stroke="#5b9bd5" stroke-width="1"/><rect x="2.500" y="2" width="8" height="10" fill="#e8f0f8" stroke="#5b9bd5" stroke-width="1"/><rect x="4.500" y="5" width="8" height="8" fill="#f0e040" stroke="#3a5a9a" stroke-width="1"/></svg>
<span class="s" style="left:621px;top:708px;color:#222;font-weight:bold;font-size:6px;line-height:6px;letter-spacing:-0.300px">EE</span>
<span class="q" style="left:632px;top:699px">Java Enterprise</span>
<svg class="i" style="left:1257px;top:701px" width="14" height="14" viewBox="0 0 14 14"><path d="M1 0.500h11a1 1 0 0 1 1 1v7a1 1 0 0 1-1 1h-3.500l1 3.500l-4-3.500h-4.500a1 1 0 0 1-1-1v-7a1 1 0 0 1 1-1z" fill="#3fb860"/><path d="M6.500 2v4" stroke="#1a3a20" stroke-width="1.800"/><rect x="5.600" y="7" width="1.800" height="1.600" fill="#1a3a20"/></svg>
<span class="q" style="left:1269px;top:700px;font-size:8px;font-weight:bold;color:#e0e4e4">2</span>
<span class="q" style="left:1280px;top:699px">Event Log</span>
<div style="left:5px;top:723px;width:14px;height:14px;background:#4a5a52;border:1px solid #b0b4b3;border-bottom:2px solid #b0b4b3"></div>
<span class="t" style="left:27px;top:720px;color:#cdd3d8;">youshop [tomcat7:run-war]: 10 classes reloaded (2 minutes ago)</span>
<span class="t" style="left:1088px;top:720px;color:#cdd3d8;">3:38</span>
<span class="t" style="left:1127px;top:720px;color:#cdd3d8;">CRLF</span>
<span class="t" style="left:1169px;top:720px;color:#cdd3d8;">UTF-8</span>
<span class="t" style="left:1218px;top:720px;color:#cdd3d8;">Git: master</span>
<svg class="i" style="left:1156px;top:726px" width="5" height="9" viewBox="0 0 5 9"><path d="M0 3.500l2.500-3l2.500 3zM0 5.500l2.500 3l2.500-3z" fill="#b0b4b3"/></svg>
<svg class="i" style="left:1205px;top:726px" width="5" height="9" viewBox="0 0 5 9"><path d="M0 3.500l2.500-3l2.500 3zM0 5.500l2.500 3l2.500-3z" fill="#b0b4b3"/></svg>
<svg class="i" style="left:1306px;top:726px" width="5" height="9" viewBox="0 0 5 9"><path d="M0 3.500l2.500-3l2.500 3zM0 5.500l2.500 3l2.500-3z" fill="#b0b4b3"/></svg>
<svg class="i" style="left:1323px;top:726px" width="10" height="9" viewBox="0 0 10 9"><path d="M1 4v-1.500a1.800 1.800 0 0 1 3.600 0" fill="none" stroke="#b0b4b3" stroke-width="1.300"/><rect x="2.500" y="4" width="7" height="5" fill="#b0b4b3"/><rect x="4.500" y="5.500" width="3" height="2" fill="#433938"/></svg>
<svg class="i" style="left:1346px;top:722px" width="15" height="17" viewBox="0 0 15 17"><path d="M3 3.500c0-4 8.500-4 8.500 0v3h-8.500z" fill="none" stroke="#7d8684" stroke-width="1.200"/><path d="M1 7h12.500" stroke="#7d8684" stroke-width="1.200"/><circle cx="5" cy="9.500" r="1.500" fill="none" stroke="#7d8684" stroke-width="1"/><circle cx="9.500" cy="9.500" r="1.500" fill="none" stroke="#7d8684" stroke-width="1"/><path d="M2 16c0-4 10.500-4 10.500 0" fill="none" stroke="#7d8684" stroke-width="1.200"/><path d="M5.500 13h3.500" stroke="#7d8684" stroke-width="1"/></svg>
</body>
</html>
